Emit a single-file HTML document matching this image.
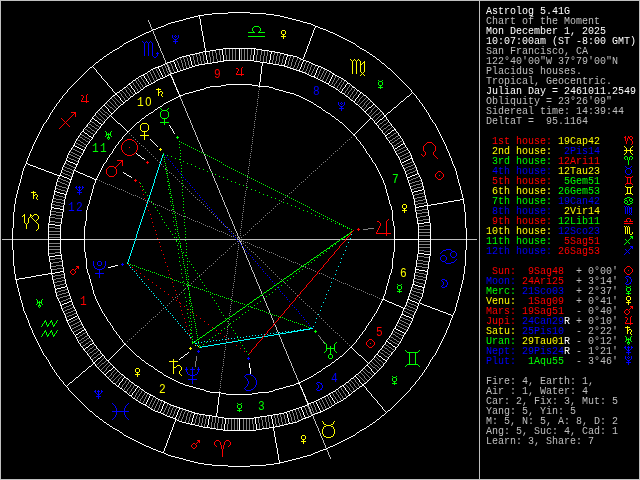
<!DOCTYPE html>
<html><head><meta charset="utf-8"><title>Astrolog 5.41G</title>
<style>
html,body{margin:0;padding:0;background:#000;}
body{width:640px;height:480px;overflow:hidden;position:relative;}
#side{position:absolute;left:0;top:0;width:640px;height:480px;font-family:"Liberation Mono",monospace;font-size:10px;line-height:10px;color:#fff;white-space:pre;will-change:transform;}
#side div{position:absolute;height:10px;}

</style></head><body>
<svg width="640" height="480" viewBox="0 0 640 480" shape-rendering="crispEdges" style="position:absolute;left:0;top:0;will-change:transform">
<path fill="none" stroke="#ffffff" stroke-width="1" transform="translate(0,0.5)" d="M228 12h22M212 13h16M250 13h16M204 14h8M266 14h8M198 15h6M274 15h6M194 16h4M199 16h1M280 16h4M190 17h4M199 17h1M284 17h4M186 18h4M199 18h1M288 18h4M183 19h3M200 19h1M292 19h4M179 20h4M200 20h1M296 20h4M175 21h4M200 21h1M300 21h3M171 22h4M200 22h1M303 22h4M168 23h3M200 23h1M307 23h4M166 24h2M200 24h1M311 24h2M164 25h2M201 25h1M313 25h2M161 26h3M201 26h1M315 26h3M158 27h3M201 27h1M315 27h1M318 27h2M156 28h2M201 28h1M314 28h1M320 28h3M153 29h3M201 29h1M314 29h1M323 29h3M151 30h2M201 30h1M313 30h1M326 30h2M149 31h2M202 31h1M313 31h1M328 31h2M146 32h3M202 32h1M313 32h1M330 32h3M144 33h2M202 33h1M312 33h1M333 33h2M142 34h2M202 34h1M312 34h1M335 34h2M140 35h2M202 35h1M312 35h1M337 35h2M138 36h2M203 36h1M311 36h1M339 36h2M136 37h2M203 37h1M311 37h1M341 37h2M134 38h2M203 38h1M310 38h1M343 38h2M132 39h2M203 39h1M310 39h1M345 39h2M130 40h2M203 40h1M310 40h1M347 40h2M128 41h2M203 41h1M309 41h1M349 41h2M126 42h2M204 42h1M309 42h1M351 42h2M124 43h2M204 43h1M309 43h1M353 43h2M123 44h1M204 44h1M308 44h1M355 44h1M122 45h1M204 45h1M308 45h1M356 45h1M120 46h2M204 46h1M307 46h1M357 46h2M119 47h1M204 47h1M307 47h1M359 47h1M117 48h2M205 48h1M223 48h33M307 48h1M360 48h2M115 49h2M205 49h1M216 49h7M239 49h1M254 49h1M256 49h6M306 49h1M362 49h2M113 50h2M205 50h1M210 50h6M222 50h1M239 50h1M254 50h1M262 50h7M306 50h1M364 50h2M112 51h1M203 51h7M222 51h1M239 51h1M254 51h1M269 51h6M306 51h1M366 51h1M110 52h2M199 52h4M205 52h1M222 52h1M239 52h1M254 52h1M271 52h1M275 52h5M305 52h1M367 52h2M109 53h1M195 53h4M205 53h1M222 53h1M239 53h1M254 53h1M271 53h1M280 53h4M305 53h1M369 53h1M107 54h2M190 54h5M205 54h1M222 54h1M239 54h1M254 54h1M270 54h1M284 54h4M304 54h1M370 54h2M106 55h1M186 55h4M206 55h1M223 55h1M239 55h1M253 55h1M270 55h1M287 55h6M304 55h1M372 55h1M104 56h2M182 56h4M189 56h1M206 56h1M223 56h1M239 56h1M253 56h1M270 56h1M287 56h1M293 56h4M304 56h1M373 56h2M103 57h1M179 57h3M190 57h1M206 57h1M223 57h1M239 57h1M253 57h1M270 57h1M286 57h1M297 57h2M303 57h1M375 57h1M102 58h1M177 58h2M190 58h1M206 58h1M223 58h1M239 58h1M253 58h1M270 58h1M286 58h1M299 58h2M303 58h1M376 58h1M100 59h2M175 59h2M190 59h1M206 59h1M223 59h1M239 59h1M253 59h1M270 59h1M286 59h1M301 59h2M377 59h2M99 60h1M173 60h2M190 60h1M207 60h1M223 60h31M269 60h1M285 60h1M303 60h3M379 60h1M98 61h1M170 61h4M191 61h1M207 61h1M218 61h6M254 61h6M269 61h1M285 61h1M303 61h1M306 61h3M380 61h1M96 62h2M167 62h3M174 62h1M191 62h1M207 62h1M212 62h6M260 62h7M269 62h1M285 62h1M302 62h1M309 62h2M381 62h1M95 63h1M165 63h2M174 63h1M191 63h1M205 63h7M262 63h1M267 63h6M285 63h1M302 63h1M311 63h2M382 63h2M94 64h1M163 64h2M175 64h1M191 64h1M199 64h6M262 64h1M273 64h6M284 64h1M301 64h1M313 64h2M384 64h1M93 65h1M161 65h2M175 65h1M192 65h1M195 65h4M262 65h1M279 65h6M301 65h1M315 65h3M385 65h1M92 66h1M158 66h3M175 66h1M192 66h3M261 66h1M284 66h3M301 66h1M318 66h3M386 66h1M90 67h2M93 67h1M155 67h4M176 67h1M189 67h3M261 67h1M287 67h3M300 67h1M318 67h1M321 67h2M387 67h1M89 68h1M94 68h1M153 68h2M158 68h1M176 68h1M186 68h3M261 68h1M290 68h3M300 68h1M317 68h1M323 68h2M388 68h2M88 69h1M95 69h1M151 69h2M159 69h1M177 69h1M183 69h3M261 69h1M293 69h3M299 69h1M317 69h1M325 69h2M390 69h1M87 70h1M96 70h1M150 70h1M159 70h1M177 70h1M180 70h3M261 70h1M296 70h4M316 70h1M327 70h2M391 70h1M86 71h1M96 71h1M148 71h2M160 71h1M177 71h3M261 71h1M299 71h3M316 71h1M329 71h2M392 71h1M85 72h1M97 72h1M147 72h1M160 72h1M174 72h3M261 72h1M302 72h3M316 72h1M331 72h1M393 72h1M84 73h1M98 73h1M145 73h2M161 73h1M171 73h3M261 73h1M305 73h2M315 73h1M332 73h2M394 73h1M83 74h1M99 74h1M143 74h2M161 74h1M169 74h2M260 74h1M307 74h2M315 74h1M333 74h2M395 74h1M82 75h1M100 75h1M141 75h3M162 75h1M167 75h2M170 75h1M260 75h1M309 75h2M314 75h1M332 75h1M335 75h2M396 75h1M81 76h1M101 76h1M139 76h2M144 76h1M162 76h1M165 76h2M171 76h1M260 76h1M311 76h4M332 76h1M337 76h2M397 76h1M80 77h1M101 77h1M138 77h1M144 77h1M163 77h2M171 77h1M260 77h1M314 77h2M331 77h1M339 77h2M398 77h1M79 78h1M102 78h1M136 78h2M145 78h1M160 78h3M172 78h1M260 78h1M316 78h2M331 78h1M341 78h2M399 78h1M78 79h1M103 79h1M135 79h1M146 79h1M158 79h2M172 79h1M260 79h1M318 79h2M330 79h1M343 79h1M400 79h1M77 80h1M104 80h1M133 80h2M146 80h1M156 80h2M173 80h1M260 80h1M320 80h2M330 80h1M344 80h2M401 80h1M76 81h1M105 81h1M132 81h1M147 81h1M155 81h1M173 81h1M260 81h1M322 81h2M329 81h1M346 81h1M402 81h1M75 82h1M106 82h1M131 82h1M148 82h1M153 82h2M173 82h1M259 82h1M324 82h2M329 82h1M347 82h1M403 82h1M74 83h1M107 83h1M129 83h2M148 83h1M151 83h2M174 83h1M259 83h1M326 83h3M347 83h3M404 83h1M73 84h1M107 84h1M128 84h2M149 84h2M174 84h1M226 84h26M259 84h1M328 84h1M346 84h1M350 84h1M405 84h1M72 85h1M108 85h1M127 85h1M130 85h1M147 85h2M175 85h1M221 85h5M252 85h6M259 85h1M329 85h2M345 85h1M351 85h1M406 85h1M71 86h1M109 86h1M126 86h1M131 86h1M145 86h2M175 86h1M210 86h11M258 86h11M331 86h2M345 86h1M352 86h1M407 86h1M70 87h1M110 87h1M124 87h2M131 87h1M144 87h1M176 87h1M206 87h4M269 87h4M333 87h2M344 87h1M353 87h2M408 87h1M69 88h1M111 88h1M123 88h1M132 88h1M143 88h1M176 88h1M204 88h2M273 88h2M335 88h1M343 88h1M355 88h1M409 88h1M68 89h1M112 89h1M122 89h1M133 89h1M141 89h2M176 89h1M200 89h4M275 89h4M336 89h2M342 89h1M356 89h1M410 89h1M67 90h1M112 90h1M120 90h2M134 90h1M140 90h1M177 90h1M196 90h4M279 90h4M338 90h1M342 90h1M357 90h2M411 90h1M67 91h1M113 91h1M119 91h1M134 91h1M139 91h1M177 91h1M193 91h3M283 91h3M339 91h1M341 91h1M359 91h1M411 91h1M66 92h1M114 92h1M117 92h2M135 92h1M137 92h2M178 92h1M189 92h4M286 92h4M340 92h2M360 92h2M412 92h1M65 93h1M115 93h2M135 93h2M178 93h1M185 93h4M290 93h4M342 93h2M360 93h1M362 93h1M411 93h1M413 93h1M64 94h1M115 94h2M134 94h1M179 94h1M183 94h2M294 94h2M344 94h1M359 94h1M363 94h1M410 94h1M414 94h1M63 95h1M113 95h2M117 95h1M133 95h1M179 95h4M296 95h3M345 95h1M358 95h1M364 95h2M409 95h1M415 95h1M62 96h1M112 96h1M118 96h1M131 96h2M178 96h2M299 96h2M346 96h2M358 96h1M366 96h1M407 96h2M416 96h1M62 97h1M111 97h1M119 97h1M130 97h1M176 97h2M301 97h2M348 97h1M357 97h1M367 97h1M406 97h1M416 97h1M61 98h1M110 98h1M120 98h1M129 98h1M174 98h2M303 98h2M349 98h1M356 98h1M368 98h1M405 98h1M417 98h1M60 99h1M109 99h1M120 99h1M128 99h1M172 99h2M305 99h2M350 99h1M355 99h1M369 99h1M404 99h1M418 99h1M59 100h1M108 100h1M121 100h1M126 100h2M170 100h2M307 100h2M351 100h2M355 100h1M370 100h1M403 100h1M419 100h1M59 101h1M107 101h1M122 101h1M125 101h1M168 101h2M309 101h2M353 101h2M371 101h1M401 101h2M419 101h1M58 102h1M106 102h1M123 102h2M166 102h2M311 102h2M354 102h1M372 102h1M400 102h1M420 102h1M57 103h1M105 103h1M123 103h1M164 103h2M313 103h1M355 103h1M373 103h1M399 103h1M421 103h1M56 104h1M104 104h1M121 104h2M163 104h1M314 104h2M356 104h2M373 104h2M398 104h1M422 104h1M56 105h1M103 105h2M120 105h1M162 105h1M316 105h1M358 105h1M372 105h1M375 105h1M397 105h1M422 105h1M55 106h1M102 106h1M105 106h1M119 106h1M160 106h2M317 106h2M359 106h1M371 106h1M376 106h1M396 106h1M423 106h1M54 107h1M101 107h1M106 107h1M118 107h1M158 107h2M319 107h2M360 107h1M369 107h2M377 107h1M394 107h2M424 107h1M54 108h1M100 108h1M107 108h1M117 108h1M157 108h1M321 108h1M361 108h1M368 108h1M378 108h1M393 108h1M424 108h1M53 109h1M99 109h1M108 109h1M116 109h1M155 109h2M322 109h1M362 109h1M367 109h1M379 109h1M392 109h1M425 109h1M52 110h1M98 110h1M108 110h1M115 110h1M154 110h1M323 110h2M363 110h1M366 110h1M380 110h1M391 110h1M426 110h1M52 111h1M97 111h1M109 111h1M114 111h1M153 111h1M325 111h1M364 111h2M381 111h1M390 111h1M426 111h1M51 112h1M96 112h1M110 112h1M113 112h1M151 112h2M326 112h2M365 112h1M382 112h1M388 112h2M427 112h1M50 113h1M95 113h1M111 113h2M149 113h2M328 113h2M366 113h1M383 113h1M387 113h1M428 113h1M50 114h1M95 114h1M111 114h1M148 114h1M330 114h1M367 114h1M383 114h1M386 114h1M428 114h1M49 115h1M94 115h1M110 115h1M146 115h2M331 115h1M368 115h1M384 115h2M429 115h1M49 116h1M93 116h1M109 116h1M111 116h1M145 116h1M332 116h2M369 116h1M384 116h2M429 116h1M48 117h1M92 117h1M108 117h1M112 117h1M144 117h1M334 117h1M370 117h1M383 117h1M386 117h1M430 117h1M48 118h1M92 118h2M107 118h1M113 118h1M142 118h2M335 118h1M370 118h2M382 118h1M386 118h1M430 118h1M47 119h1M91 119h1M94 119h1M106 119h1M114 119h1M141 119h1M336 119h2M369 119h1M372 119h1M380 119h2M387 119h1M431 119h1M46 120h1M90 120h1M95 120h2M105 120h1M115 120h1M140 120h1M338 120h1M368 120h1M373 120h1M379 120h1M388 120h1M432 120h1M46 121h1M90 121h1M97 121h1M104 121h1M116 121h1M139 121h1M339 121h1M367 121h1M374 121h1M378 121h1M388 121h1M432 121h1M45 122h1M89 122h1M98 122h1M104 122h1M117 122h1M137 122h2M340 122h2M366 122h1M374 122h1M377 122h1M389 122h1M433 122h1M44 123h1M88 123h1M99 123h2M103 123h1M118 123h2M136 123h1M342 123h1M365 123h1M375 123h2M390 123h1M434 123h1M43 124h1M87 124h1M101 124h2M120 124h1M135 124h1M343 124h1M364 124h1M376 124h1M391 124h1M435 124h1M43 125h1M87 125h1M101 125h1M121 125h1M134 125h1M169 125h1M344 125h1M363 125h1M377 125h1M391 125h1M435 125h1M42 126h1M86 126h1M100 126h1M122 126h1M133 126h1M170 126h1M345 126h1M362 126h1M378 126h1M392 126h1M436 126h1M42 127h1M85 127h1M100 127h1M123 127h1M132 127h1M170 127h1M346 127h1M361 127h1M378 127h1M393 127h1M436 127h1M41 128h1M84 128h1M99 128h1M124 128h1M131 128h1M171 128h1M347 128h1M360 128h1M379 128h1M394 128h1M437 128h1M41 129h1M83 129h1M98 129h1M125 129h1M130 129h1M172 129h1M348 129h1M359 129h1M380 129h1M394 129h2M437 129h1M40 130h1M83 130h1M97 130h1M126 130h1M129 130h1M172 130h1M349 130h1M358 130h1M381 130h1M392 130h2M395 130h1M438 130h1M40 131h1M82 131h2M96 131h1M127 131h2M173 131h1M350 131h1M357 131h1M382 131h1M391 131h1M396 131h1M438 131h1M39 132h1M81 132h1M84 132h1M96 132h1M127 132h1M173 132h1M351 132h1M356 132h1M382 132h1M390 132h1M397 132h1M439 132h1M39 133h1M80 133h1M85 133h2M95 133h1M126 133h1M174 133h1M352 133h1M355 133h1M383 133h1M388 133h2M398 133h1M439 133h1M38 134h1M80 134h1M87 134h1M94 134h1M125 134h1M353 134h2M384 134h1M387 134h1M398 134h1M440 134h1M38 135h1M79 135h1M88 135h1M93 135h1M124 135h1M354 135h1M385 135h2M399 135h1M440 135h1M37 136h1M78 136h1M89 136h2M93 136h1M123 136h1M355 136h1M385 136h1M400 136h1M441 136h1M37 137h1M78 137h1M91 137h2M122 137h1M356 137h1M386 137h1M400 137h1M441 137h1M36 138h1M77 138h1M92 138h1M122 138h1M356 138h1M386 138h1M401 138h1M442 138h1M36 139h1M76 139h1M91 139h1M121 139h1M150 139h1M357 139h1M387 139h1M402 139h1M442 139h1M35 140h1M76 140h1M90 140h1M120 140h1M151 140h1M358 140h1M388 140h1M402 140h1M443 140h1M35 141h1M75 141h1M89 141h1M119 141h1M152 141h1M359 141h1M389 141h1M403 141h1M443 141h1M34 142h1M75 142h1M89 142h1M118 142h1M153 142h1M360 142h1M389 142h1M403 142h1M444 142h1M34 143h1M74 143h1M88 143h1M118 143h1M154 143h1M360 143h1M390 143h1M403 143h2M444 143h1M33 144h1M74 144h1M87 144h1M117 144h1M155 144h1M361 144h1M391 144h1M401 144h2M404 144h1M445 144h1M33 145h1M73 145h2M86 145h1M116 145h1M156 145h1M362 145h1M392 145h1M400 145h1M405 145h1M445 145h1M32 146h1M73 146h1M75 146h2M86 146h1M115 146h1M157 146h1M363 146h1M392 146h1M398 146h2M405 146h1M446 146h1M32 147h1M72 147h1M77 147h2M85 147h1M115 147h1M363 147h1M393 147h1M397 147h1M406 147h1M446 147h1M32 148h1M71 148h1M79 148h2M85 148h1M114 148h1M364 148h1M393 148h1M395 148h2M407 148h1M446 148h1M31 149h1M71 149h1M81 149h2M84 149h1M113 149h1M365 149h1M394 149h1M407 149h1M447 149h1M31 150h1M70 150h1M83 150h2M113 150h1M365 150h1M394 150h1M408 150h1M447 150h1M30 151h1M69 151h1M83 151h1M112 151h1M366 151h1M395 151h1M409 151h1M448 151h1M30 152h1M69 152h1M83 152h1M112 152h1M366 152h1M395 152h1M409 152h1M448 152h1M29 153h1M68 153h1M82 153h1M111 153h1M136 153h1M367 153h1M396 153h1M410 153h1M449 153h1M29 154h1M68 154h1M82 154h1M110 154h1M137 154h1M368 154h1M396 154h1M410 154h1M449 154h1M29 155h1M67 155h1M81 155h1M109 155h1M138 155h2M369 155h1M397 155h1M411 155h1M449 155h1M28 156h1M67 156h1M80 156h1M109 156h1M140 156h1M369 156h1M398 156h1M411 156h1M450 156h1M28 157h1M67 157h1M80 157h1M108 157h1M141 157h1M370 157h1M398 157h1M411 157h1M450 157h1M27 158h1M66 158h1M79 158h1M107 158h1M142 158h2M371 158h1M399 158h1M410 158h3M451 158h1M27 159h1M66 159h1M79 159h1M107 159h1M144 159h1M371 159h1M399 159h1M408 159h2M412 159h1M451 159h1M27 160h1M66 160h2M78 160h1M106 160h1M372 160h1M400 160h1M406 160h2M412 160h1M451 160h1M26 161h1M65 161h1M68 161h2M78 161h1M106 161h1M372 161h1M400 161h1M404 161h2M413 161h1M452 161h1M26 162h1M65 162h1M70 162h3M78 162h1M105 162h1M373 162h1M400 162h1M402 162h2M413 162h1M452 162h1M26 163h2M64 163h1M73 163h2M77 163h1M104 163h1M374 163h1M401 163h1M414 163h1M452 163h1M25 164h1M28 164h2M64 164h1M75 164h3M103 164h1M375 164h1M401 164h1M414 164h1M453 164h1M25 165h1M30 165h3M63 165h1M76 165h1M103 165h1M375 165h1M402 165h1M415 165h1M453 165h1M24 166h1M33 166h3M63 166h1M76 166h1M102 166h1M376 166h1M402 166h1M415 166h1M454 166h1M24 167h1M36 167h2M62 167h1M75 167h1M102 167h1M376 167h1M403 167h1M416 167h1M454 167h1M23 168h1M38 168h3M62 168h1M75 168h1M101 168h1M377 168h1M403 168h1M416 168h1M455 168h1M23 169h1M41 169h3M62 169h1M74 169h1M101 169h1M377 169h1M404 169h1M416 169h1M455 169h1M23 170h1M44 170h2M61 170h1M74 170h2M100 170h1M378 170h1M404 170h1M417 170h1M455 170h1M22 171h1M46 171h3M61 171h1M73 171h1M76 171h2M100 171h1M378 171h1M405 171h1M417 171h1M456 171h1M22 172h1M49 172h3M61 172h1M73 172h1M78 172h2M99 172h1M123 172h1M379 172h1M405 172h1M417 172h1M456 172h1M22 173h1M52 173h2M60 173h1M73 173h1M80 173h3M99 173h1M124 173h2M379 173h1M405 173h1M417 173h2M456 173h1M22 174h1M54 174h3M60 174h1M72 174h1M83 174h2M98 174h1M126 174h1M380 174h1M406 174h1M415 174h2M418 174h1M456 174h1M21 175h1M57 175h5M72 175h1M85 175h2M98 175h1M127 175h2M380 175h1M406 175h1M412 175h3M419 175h1M457 175h1M21 176h1M59 176h1M62 176h2M72 176h1M87 176h3M97 176h1M129 176h2M381 176h1M406 176h1M410 176h2M419 176h1M457 176h1M21 177h1M58 177h1M64 177h3M71 177h1M90 177h2M97 177h1M131 177h1M381 177h1M407 177h3M420 177h1M457 177h1M21 178h1M58 178h1M67 178h2M71 178h1M92 178h2M96 178h1M382 178h1M407 178h1M420 178h1M457 178h1M20 179h1M57 179h1M69 179h3M94 179h3M382 179h1M407 179h1M421 179h1M458 179h1M20 180h1M57 180h1M70 180h1M95 180h1M383 180h1M408 180h1M421 180h1M458 180h1M20 181h1M57 181h1M70 181h1M95 181h1M383 181h1M408 181h1M421 181h1M458 181h1M20 182h1M56 182h1M70 182h1M95 182h1M383 182h1M408 182h1M422 182h1M458 182h1M19 183h1M56 183h1M69 183h1M94 183h1M384 183h1M409 183h1M422 183h1M459 183h1M19 184h1M56 184h1M69 184h1M94 184h1M384 184h1M409 184h1M422 184h1M459 184h1M19 185h1M56 185h1M69 185h1M93 185h1M385 185h1M409 185h1M422 185h1M459 185h1M18 186h1M55 186h1M68 186h1M93 186h1M385 186h1M410 186h1M423 186h1M460 186h1M18 187h1M55 187h1M68 187h1M93 187h1M385 187h1M410 187h1M423 187h1M460 187h1M18 188h1M55 188h1M68 188h1M93 188h1M385 188h1M410 188h1M423 188h1M460 188h1M18 189h1M55 189h1M67 189h1M92 189h1M386 189h1M411 189h1M422 189h2M460 189h1M17 190h1M54 190h1M67 190h1M92 190h1M386 190h1M411 190h1M418 190h4M424 190h1M461 190h1M17 191h1M54 191h3M67 191h1M92 191h1M386 191h1M411 191h1M414 191h4M424 191h1M461 191h1M17 192h1M54 192h1M57 192h3M66 192h1M92 192h1M386 192h1M412 192h2M424 192h1M461 192h1M17 193h1M54 193h1M60 193h4M66 193h1M91 193h1M387 193h1M412 193h1M424 193h1M461 193h1M16 194h1M54 194h1M64 194h3M91 194h1M387 194h1M412 194h1M424 194h1M462 194h1M16 195h1M53 195h1M65 195h1M91 195h1M387 195h1M413 195h1M425 195h1M462 195h1M16 196h1M53 196h1M65 196h1M90 196h1M388 196h1M413 196h1M425 196h1M462 196h1M16 197h1M53 197h1M65 197h1M90 197h1M388 197h1M413 197h1M425 197h1M462 197h1M15 198h1M53 198h1M65 198h1M90 198h1M388 198h1M413 198h1M425 198h1M463 198h1M15 199h1M52 199h1M64 199h1M90 199h1M388 199h1M414 199h1M426 199h1M460 199h4M15 200h1M52 200h1M64 200h1M89 200h1M389 200h1M414 200h1M426 200h1M454 200h6M463 200h1M15 201h1M52 201h1M64 201h1M89 201h1M389 201h1M414 201h1M426 201h1M448 201h6M463 201h1M15 202h1M52 202h1M64 202h1M89 202h1M389 202h1M414 202h1M426 202h1M443 202h5M463 202h1M15 203h1M51 203h1M64 203h1M89 203h1M389 203h1M414 203h1M427 203h1M437 203h6M463 203h1M14 204h1M51 204h1M64 204h1M88 204h1M390 204h1M414 204h1M427 204h1M431 204h6M464 204h1M14 205h1M51 205h1M63 205h1M88 205h1M390 205h1M415 205h1M424 205h7M464 205h1M14 206h1M51 206h1M63 206h1M87 206h1M391 206h1M415 206h1M419 206h5M427 206h1M464 206h1M14 207h1M51 207h3M63 207h1M87 207h1M391 207h1M415 207h4M427 207h1M464 207h1M14 208h1M51 208h1M54 208h6M63 208h1M87 208h1M391 208h1M415 208h1M427 208h1M464 208h1M14 209h1M51 209h1M60 209h4M87 209h1M391 209h1M415 209h1M427 209h1M464 209h1M14 210h1M50 210h1M63 210h1M86 210h1M392 210h1M415 210h1M428 210h1M464 210h1M14 211h1M50 211h1M63 211h1M86 211h1M392 211h1M415 211h1M428 211h1M464 211h1M13 212h1M50 212h1M62 212h1M86 212h1M392 212h1M416 212h1M428 212h1M465 212h1M13 213h1M50 213h1M62 213h1M86 213h1M392 213h1M416 213h1M428 213h1M465 213h1M13 214h1M50 214h1M62 214h1M86 214h1M392 214h1M416 214h1M428 214h1M465 214h1M13 215h1M50 215h1M62 215h1M86 215h1M392 215h1M416 215h1M428 215h1M465 215h1M13 216h1M49 216h1M62 216h1M86 216h1M392 216h1M416 216h1M429 216h1M465 216h1M13 217h1M49 217h1M62 217h1M86 217h1M392 217h1M416 217h1M429 217h1M465 217h1M13 218h1M49 218h1M61 218h1M86 218h1M392 218h1M417 218h1M429 218h1M465 218h1M13 219h1M49 219h1M61 219h1M86 219h1M392 219h1M417 219h1M429 219h1M465 219h1M13 220h1M49 220h1M61 220h1M86 220h1M392 220h1M417 220h1M429 220h1M465 220h1M13 221h1M49 221h1M61 221h1M85 221h1M393 221h1M417 221h1M429 221h1M465 221h1M13 222h1M49 222h1M61 222h1M85 222h1M393 222h1M417 222h1M424 222h6M465 222h1M13 223h1M48 223h1M61 223h1M85 223h1M393 223h1M417 223h7M430 223h1M465 223h1M13 224h1M48 224h7M60 224h1M85 224h1M393 224h1M418 224h1M430 224h1M465 224h1M13 225h1M48 225h1M55 225h6M85 225h1M393 225h1M418 225h1M430 225h1M465 225h1M13 226h1M48 226h1M60 226h1M84 226h1M394 226h1M418 226h1M430 226h1M465 226h1M13 227h1M48 227h1M60 227h1M84 227h1M394 227h1M418 227h1M430 227h1M465 227h1M12 228h1M48 228h1M60 228h1M84 228h1M394 228h1M418 228h1M430 228h1M466 228h1M12 229h1M48 229h1M60 229h1M84 229h1M394 229h1M418 229h1M430 229h1M466 229h1M12 230h1M48 230h1M60 230h1M84 230h1M394 230h1M418 230h1M430 230h1M466 230h1M12 231h1M48 231h1M60 231h1M84 231h1M394 231h1M418 231h1M430 231h1M466 231h1M12 232h1M48 232h1M60 232h1M84 232h1M394 232h1M418 232h1M430 232h1M466 232h1M12 233h1M48 233h1M60 233h1M84 233h1M394 233h1M418 233h1M430 233h1M466 233h1M12 234h1M48 234h1M60 234h1M84 234h1M394 234h1M418 234h1M430 234h1M466 234h1M12 235h1M48 235h1M60 235h1M84 235h1M394 235h1M418 235h1M430 235h1M466 235h1M12 236h1M48 236h1M60 236h1M84 236h1M394 236h1M418 236h1M430 236h1M466 236h1M12 237h1M48 237h1M60 237h1M84 237h1M394 237h1M418 237h1M430 237h1M466 237h1M12 238h1M48 238h1M60 238h1M84 238h1M394 238h1M418 238h1M430 238h1M466 238h1M12 239h1M48 239h37M394 239h37M466 239h1M12 240h1M48 240h1M60 240h1M84 240h1M394 240h1M418 240h1M430 240h1M466 240h1M12 241h1M48 241h1M60 241h1M84 241h1M394 241h1M418 241h1M430 241h1M466 241h1M12 242h1M48 242h1M60 242h1M84 242h1M394 242h1M418 242h1M430 242h1M466 242h1M12 243h1M48 243h1M60 243h1M84 243h1M394 243h1M418 243h1M430 243h1M466 243h1M12 244h1M48 244h1M60 244h1M84 244h1M394 244h1M418 244h1M430 244h1M466 244h1M12 245h1M48 245h1M60 245h1M84 245h1M394 245h1M418 245h1M430 245h1M466 245h1M12 246h1M48 246h1M60 246h1M84 246h1M394 246h1M418 246h1M430 246h1M466 246h1M12 247h1M48 247h1M60 247h1M84 247h1M394 247h1M418 247h1M430 247h1M466 247h1M12 248h1M48 248h1M60 248h1M84 248h1M394 248h1M418 248h1M430 248h1M466 248h1M12 249h1M48 249h1M60 249h1M84 249h1M394 249h1M418 249h1M430 249h1M466 249h1M13 250h1M48 250h1M60 250h1M84 250h1M394 250h1M418 250h1M430 250h1M465 250h1M13 251h1M48 251h1M60 251h1M84 251h1M394 251h1M418 251h1M430 251h1M465 251h1M13 252h1M48 252h1M60 252h1M85 252h1M393 252h1M418 252h1M430 252h1M465 252h1M13 253h1M48 253h1M60 253h1M85 253h1M393 253h1M418 253h6M430 253h1M465 253h1M13 254h1M48 254h1M61 254h1M85 254h1M393 254h1M417 254h1M424 254h7M465 254h1M13 255h1M48 255h1M55 255h7M85 255h1M393 255h1M417 255h1M430 255h1M465 255h1M13 256h1M49 256h6M61 256h1M85 256h1M393 256h1M417 256h1M429 256h1M465 256h1M13 257h1M49 257h1M61 257h1M85 257h1M393 257h1M417 257h1M429 257h1M465 257h1M13 258h1M49 258h1M61 258h1M86 258h1M392 258h1M417 258h1M429 258h1M465 258h1M13 259h1M49 259h1M61 259h1M86 259h1M392 259h1M417 259h1M429 259h1M465 259h1M13 260h1M49 260h1M62 260h1M86 260h1M392 260h1M416 260h1M429 260h1M465 260h1M13 261h1M49 261h1M62 261h1M86 261h1M392 261h1M416 261h1M429 261h1M465 261h1M13 262h1M50 262h1M62 262h1M86 262h1M392 262h1M416 262h1M428 262h1M465 262h1M13 263h1M50 263h1M62 263h1M86 263h1M392 263h1M416 263h1M428 263h1M465 263h1M13 264h1M50 264h1M62 264h1M86 264h1M392 264h1M416 264h1M428 264h1M465 264h1M13 265h1M50 265h1M62 265h1M86 265h1M115 265h3M392 265h1M416 265h1M428 265h1M465 265h1M14 266h1M50 266h1M62 266h1M86 266h1M111 266h4M392 266h1M416 266h1M428 266h1M464 266h1M14 267h1M50 267h1M63 267h1M86 267h1M108 267h3M392 267h1M415 267h1M428 267h1M464 267h1M14 268h1M50 268h1M63 268h1M86 268h1M392 268h1M415 268h1M428 268h1M464 268h1M14 269h1M51 269h1M63 269h1M87 269h1M391 269h1M415 269h4M427 269h1M464 269h1M14 270h1M51 270h1M63 270h1M87 270h1M391 270h1M415 270h1M419 270h6M427 270h1M464 270h1M14 271h1M51 271h1M60 271h4M87 271h1M391 271h1M415 271h1M425 271h3M464 271h1M14 272h1M51 272h1M55 272h5M63 272h1M87 272h1M391 272h1M415 272h1M427 272h1M464 272h1M14 273h1M48 273h7M64 273h1M88 273h1M390 273h1M414 273h1M427 273h1M464 273h1M15 274h1M42 274h6M51 274h1M64 274h1M88 274h1M390 274h1M414 274h1M427 274h1M463 274h1M15 275h1M36 275h6M52 275h1M64 275h1M89 275h1M389 275h1M414 275h1M426 275h1M463 275h1M15 276h1M31 276h5M52 276h1M64 276h1M89 276h1M389 276h1M414 276h1M426 276h1M463 276h1M15 277h1M25 277h6M52 277h1M64 277h1M89 277h1M389 277h1M414 277h1M426 277h1M463 277h1M15 278h1M19 278h6M52 278h1M64 278h1M89 278h1M389 278h1M414 278h1M426 278h1M463 278h1M15 279h4M52 279h1M65 279h1M90 279h1M388 279h1M413 279h1M426 279h1M463 279h1M16 280h1M53 280h1M65 280h1M90 280h1M388 280h1M413 280h1M425 280h1M462 280h1M16 281h1M53 281h1M65 281h1M90 281h1M388 281h1M413 281h1M425 281h1M462 281h1M16 282h1M53 282h1M65 282h1M90 282h1M388 282h1M413 282h1M425 282h1M462 282h1M16 283h1M53 283h1M65 283h1M91 283h1M387 283h1M413 283h1M425 283h1M462 283h1M17 284h1M54 284h1M66 284h1M91 284h1M387 284h1M412 284h3M424 284h1M461 284h1M17 285h1M54 285h1M66 285h1M91 285h1M387 285h1M412 285h1M415 285h3M424 285h1M461 285h1M17 286h1M54 286h1M65 286h2M92 286h1M386 286h1M412 286h1M418 286h4M424 286h1M461 286h1M17 287h1M54 287h1M61 287h4M67 287h1M92 287h1M386 287h1M411 287h1M422 287h3M461 287h1M18 288h1M55 288h1M57 288h4M67 288h1M92 288h1M386 288h1M411 288h1M423 288h1M460 288h1M18 289h1M55 289h2M67 289h1M92 289h1M386 289h1M411 289h1M423 289h1M460 289h1M18 290h1M55 290h1M68 290h1M93 290h1M385 290h1M410 290h1M423 290h1M460 290h1M18 291h1M55 291h1M68 291h1M93 291h1M385 291h1M410 291h1M423 291h1M460 291h1M19 292h1M55 292h1M68 292h1M93 292h1M385 292h1M410 292h1M423 292h1M459 292h1M19 293h1M56 293h1M69 293h1M93 293h1M385 293h1M409 293h1M422 293h1M459 293h1M19 294h1M56 294h1M69 294h1M94 294h1M384 294h1M409 294h1M422 294h1M459 294h1M19 295h1M56 295h1M69 295h1M94 295h1M384 295h1M409 295h1M422 295h1M459 295h1M20 296h1M56 296h1M70 296h1M95 296h1M383 296h1M408 296h1M422 296h1M458 296h1M20 297h1M57 297h1M70 297h1M95 297h1M383 297h1M408 297h1M421 297h1M458 297h1M20 298h1M57 298h1M70 298h1M95 298h1M383 298h1M408 298h1M421 298h1M458 298h1M20 299h1M58 299h1M71 299h1M96 299h1M382 299h3M407 299h3M420 299h1M458 299h1M21 300h1M58 300h1M71 300h1M96 300h1M382 300h1M385 300h2M407 300h1M410 300h2M420 300h1M457 300h1M21 301h1M59 301h1M69 301h3M97 301h1M381 301h1M387 301h2M407 301h1M412 301h3M419 301h1M457 301h1M21 302h1M59 302h1M67 302h2M72 302h1M97 302h1M381 302h1M389 302h3M406 302h1M415 302h2M419 302h1M457 302h1M22 303h1M60 303h1M64 303h3M72 303h1M98 303h1M380 303h1M392 303h2M406 303h1M417 303h2M420 303h2M456 303h1M22 304h1M60 304h1M62 304h2M72 304h1M98 304h1M380 304h1M394 304h2M406 304h1M418 304h1M422 304h2M456 304h1M22 305h1M60 305h2M73 305h1M99 305h1M379 305h1M396 305h3M405 305h1M418 305h1M424 305h3M456 305h1M22 306h1M61 306h1M73 306h1M99 306h1M379 306h1M399 306h2M405 306h1M417 306h1M427 306h3M456 306h1M23 307h1M61 307h1M74 307h1M100 307h1M378 307h1M401 307h2M404 307h1M417 307h1M430 307h2M455 307h1M23 308h1M61 308h1M74 308h1M100 308h1M378 308h1M403 308h2M417 308h1M432 308h3M455 308h1M23 309h1M62 309h1M75 309h1M101 309h1M377 309h1M403 309h1M416 309h1M435 309h3M455 309h1M23 310h1M62 310h1M75 310h1M101 310h1M377 310h1M403 310h1M416 310h1M438 310h2M455 310h1M24 311h1M63 311h1M76 311h1M102 311h1M376 311h1M402 311h1M415 311h1M440 311h3M454 311h1M24 312h1M63 312h1M76 312h1M102 312h1M376 312h1M402 312h1M415 312h1M443 312h3M454 312h1M25 313h1M64 313h1M76 313h1M103 313h1M375 313h1M402 313h1M414 313h1M446 313h2M453 313h1M25 314h1M64 314h1M77 314h1M104 314h1M374 314h1M401 314h3M414 314h1M448 314h3M453 314h1M26 315h1M65 315h1M77 315h1M104 315h1M374 315h1M401 315h1M404 315h2M413 315h1M451 315h2M26 316h1M65 316h1M75 316h2M78 316h1M105 316h1M373 316h1M400 316h1M406 316h3M413 316h1M452 316h1M26 317h1M65 317h1M73 317h2M78 317h1M106 317h1M372 317h1M400 317h1M409 317h2M413 317h1M452 317h1M27 318h1M66 318h1M71 318h2M79 318h1M106 318h1M372 318h1M399 318h1M411 318h2M451 318h1M27 319h1M66 319h1M69 319h2M79 319h1M107 319h1M371 319h1M399 319h1M412 319h1M451 319h1M28 320h1M66 320h3M80 320h1M107 320h1M371 320h1M398 320h1M412 320h1M450 320h1M28 321h1M67 321h1M80 321h1M108 321h1M370 321h1M398 321h1M411 321h1M450 321h1M28 322h1M67 322h1M81 322h1M109 322h1M369 322h1M397 322h1M411 322h1M450 322h1M29 323h1M68 323h1M81 323h1M110 323h1M368 323h1M397 323h1M410 323h1M449 323h1M29 324h1M68 324h1M82 324h1M110 324h1M368 324h1M396 324h1M410 324h1M449 324h1M29 325h1M69 325h1M82 325h1M111 325h1M367 325h1M396 325h1M409 325h1M449 325h1M30 326h1M69 326h1M83 326h1M112 326h1M366 326h1M395 326h1M409 326h1M448 326h1M30 327h1M70 327h1M83 327h1M112 327h1M366 327h1M395 327h1M408 327h1M448 327h1M31 328h1M70 328h1M84 328h1M113 328h1M365 328h1M394 328h2M408 328h1M447 328h1M31 329h1M71 329h1M84 329h2M113 329h1M365 329h1M393 329h1M396 329h2M407 329h1M447 329h1M32 330h1M71 330h1M82 330h2M85 330h1M114 330h1M364 330h1M393 330h1M398 330h2M407 330h1M446 330h1M32 331h1M72 331h1M81 331h1M86 331h1M115 331h1M363 331h1M392 331h1M400 331h2M406 331h1M446 331h1M32 332h1M73 332h1M79 332h2M86 332h1M116 332h1M362 332h1M392 332h1M402 332h2M405 332h1M446 332h1M33 333h1M73 333h1M78 333h1M87 333h1M116 333h1M362 333h1M391 333h1M404 333h2M445 333h1M33 334h1M74 334h1M76 334h2M87 334h1M117 334h1M361 334h1M391 334h1M404 334h1M445 334h1M34 335h1M75 335h1M88 335h1M118 335h1M360 335h1M390 335h1M403 335h1M444 335h1M34 336h1M75 336h1M89 336h1M119 336h1M359 336h1M389 336h1M403 336h1M444 336h1M35 337h1M76 337h1M89 337h1M119 337h1M359 337h1M389 337h1M402 337h1M443 337h1M35 338h1M76 338h1M90 338h1M120 338h1M358 338h1M388 338h1M402 338h1M443 338h1M36 339h1M77 339h1M91 339h1M121 339h1M357 339h1M387 339h1M401 339h1M442 339h1M36 340h1M77 340h1M92 340h1M122 340h1M356 340h1M386 340h1M401 340h1M442 340h1M37 341h1M78 341h1M92 341h1M122 341h1M356 341h1M386 341h2M400 341h1M441 341h1M37 342h1M78 342h1M93 342h1M123 342h1M355 342h1M385 342h1M388 342h1M400 342h1M441 342h1M38 343h1M79 343h1M92 343h2M124 343h1M354 343h1M385 343h1M389 343h2M399 343h1M440 343h1M38 344h1M80 344h1M90 344h2M94 344h1M124 344h2M353 344h1M384 344h1M391 344h1M398 344h1M440 344h1M39 345h1M80 345h1M89 345h1M95 345h1M123 345h1M126 345h1M352 345h1M383 345h1M392 345h1M398 345h1M439 345h1M39 346h1M81 346h1M88 346h1M96 346h1M122 346h1M127 346h1M351 346h1M382 346h1M393 346h2M397 346h1M439 346h1M40 347h1M82 347h1M86 347h2M96 347h1M121 347h1M128 347h1M350 347h2M382 347h1M395 347h2M438 347h1M40 348h1M83 348h1M85 348h1M97 348h1M120 348h1M129 348h1M349 348h1M352 348h1M381 348h1M395 348h1M438 348h1M41 349h1M83 349h2M98 349h1M119 349h1M130 349h1M348 349h1M353 349h1M380 349h1M395 349h1M437 349h1M41 350h1M84 350h1M99 350h1M118 350h1M131 350h1M347 350h1M354 350h1M379 350h1M394 350h1M437 350h1M42 351h1M85 351h1M100 351h1M117 351h1M132 351h1M346 351h1M355 351h1M378 351h1M393 351h1M436 351h1M42 352h1M86 352h1M100 352h1M116 352h1M133 352h1M188 352h1M345 352h1M356 352h1M378 352h1M392 352h1M436 352h1M43 353h1M87 353h1M101 353h1M115 353h1M134 353h1M187 353h1M344 353h1M357 353h1M377 353h1M391 353h1M435 353h1M43 354h1M87 354h1M102 354h1M114 354h1M135 354h1M185 354h2M343 354h1M358 354h1M376 354h2M391 354h1M435 354h1M44 355h1M88 355h1M102 355h2M113 355h1M136 355h1M184 355h1M342 355h1M359 355h2M375 355h1M378 355h1M390 355h1M434 355h1M45 356h1M89 356h1M101 356h1M104 356h1M112 356h1M137 356h2M183 356h1M340 356h2M361 356h1M374 356h1M379 356h2M389 356h1M433 356h1M46 357h1M90 357h1M100 357h1M104 357h1M111 357h1M139 357h1M181 357h2M339 357h1M362 357h1M374 357h1M381 357h1M388 357h1M432 357h1M46 358h1M90 358h1M98 358h2M105 358h1M110 358h1M140 358h1M180 358h1M338 358h1M363 358h1M373 358h1M382 358h1M388 358h1M432 358h1M47 359h1M91 359h1M97 359h1M106 359h1M109 359h1M141 359h1M179 359h1M336 359h2M364 359h1M372 359h1M383 359h2M387 359h1M431 359h1M48 360h1M92 360h1M96 360h1M107 360h2M142 360h2M335 360h1M365 360h1M371 360h1M385 360h2M430 360h1M48 361h1M92 361h1M95 361h1M108 361h1M144 361h1M334 361h1M366 361h1M370 361h1M386 361h1M430 361h1M49 362h1M93 362h2M109 362h1M145 362h1M332 362h2M367 362h1M369 362h1M385 362h1M429 362h1M49 363h1M93 363h2M110 363h1M146 363h2M249 363h1M331 363h1M368 363h1M384 363h1M429 363h1M50 364h1M92 364h1M95 364h1M111 364h1M148 364h1M249 364h1M330 364h1M367 364h1M383 364h1M428 364h1M50 365h1M91 365h1M95 365h1M112 365h1M149 365h2M249 365h1M328 365h2M366 365h2M383 365h1M428 365h1M51 366h1M89 366h2M96 366h1M113 366h1M151 366h2M249 366h1M326 366h2M365 366h1M368 366h1M382 366h1M427 366h1M52 367h1M88 367h1M97 367h1M113 367h2M153 367h1M249 367h1M325 367h1M364 367h1M369 367h1M381 367h1M426 367h1M52 368h1M87 368h1M98 368h1M112 368h1M115 368h1M154 368h1M250 368h1M323 368h2M363 368h1M370 368h1M380 368h1M426 368h1M53 369h1M86 369h1M99 369h1M111 369h1M116 369h1M155 369h2M250 369h1M322 369h1M362 369h1M371 369h1M379 369h1M425 369h1M54 370h1M85 370h1M100 370h1M109 370h2M117 370h1M157 370h1M250 370h1M321 370h1M361 370h1M371 370h1M378 370h1M424 370h1M54 371h1M83 371h2M101 371h1M108 371h1M118 371h1M158 371h2M250 371h1M319 371h2M360 371h1M372 371h1M377 371h1M424 371h1M55 372h1M82 372h1M102 372h1M107 372h1M119 372h1M160 372h2M250 372h1M317 372h2M359 372h1M373 372h1M376 372h1M423 372h1M56 373h1M81 373h1M103 373h1M106 373h1M120 373h1M162 373h1M250 373h1M316 373h1M358 373h1M374 373h2M422 373h1M56 374h1M80 374h1M104 374h2M121 374h2M163 374h1M314 374h2M356 374h2M374 374h1M422 374h1M57 375h1M79 375h1M105 375h1M123 375h1M164 375h2M313 375h1M355 375h1M373 375h1M421 375h1M58 376h1M78 376h1M106 376h1M124 376h1M166 376h2M311 376h2M354 376h2M372 376h1M420 376h1M59 377h1M76 377h2M107 377h1M124 377h2M168 377h2M309 377h2M353 377h1M356 377h1M371 377h1M419 377h1M59 378h1M75 378h1M108 378h1M123 378h1M126 378h2M170 378h2M307 378h2M351 378h2M357 378h1M370 378h1M419 378h1M60 379h1M74 379h1M109 379h1M122 379h1M128 379h1M172 379h2M305 379h2M350 379h1M358 379h1M369 379h1M418 379h1M61 380h1M73 380h1M110 380h1M122 380h1M129 380h1M174 380h2M303 380h2M349 380h1M359 380h1M368 380h1M417 380h1M62 381h1M72 381h1M111 381h1M121 381h1M130 381h1M176 381h2M301 381h2M348 381h1M359 381h1M367 381h1M416 381h1M63 382h1M70 382h2M112 382h1M120 382h1M131 382h2M178 382h2M299 382h2M346 382h2M360 382h1M366 382h1M415 382h1M63 383h1M69 383h1M113 383h2M119 383h1M133 383h1M180 383h3M296 383h4M345 383h1M361 383h1M364 383h2M415 383h1M64 384h1M68 384h1M115 384h1M119 384h1M134 384h1M183 384h2M294 384h2M299 384h1M344 384h1M362 384h2M414 384h1M65 385h1M67 385h1M116 385h1M118 385h1M135 385h2M185 385h4M290 385h4M300 385h1M342 385h2M362 385h2M413 385h1M66 386h1M117 386h2M137 386h2M189 386h4M286 386h4M300 386h1M340 386h2M343 386h1M360 386h2M364 386h1M412 386h1M67 387h1M119 387h1M137 387h1M139 387h1M193 387h3M283 387h3M301 387h1M339 387h1M344 387h1M359 387h1M365 387h1M411 387h1M68 388h1M120 388h2M136 388h1M140 388h1M196 388h4M279 388h4M301 388h1M338 388h1M345 388h1M357 388h2M366 388h1M410 388h1M68 389h1M122 389h1M135 389h1M141 389h2M200 389h4M275 389h4M302 389h1M336 389h2M345 389h1M356 389h1M366 389h1M410 389h1M69 390h1M123 390h1M135 390h1M143 390h1M204 390h2M273 390h2M302 390h1M335 390h1M346 390h1M355 390h1M367 390h1M409 390h1M70 391h1M124 391h2M134 391h1M144 391h1M206 391h4M269 391h4M302 391h1M333 391h2M347 391h1M353 391h2M368 391h1M408 391h1M71 392h1M126 392h1M133 392h1M145 392h2M210 392h11M258 392h11M303 392h1M331 392h2M348 392h1M352 392h1M369 392h1M407 392h1M72 393h1M127 393h1M132 393h1M147 393h2M219 393h1M221 393h5M252 393h6M303 393h1M329 393h2M348 393h1M351 393h1M370 393h1M406 393h1M73 394h1M128 394h1M132 394h1M149 394h2M219 394h1M226 394h26M304 394h1M328 394h2M349 394h2M371 394h1M405 394h1M74 395h1M129 395h3M150 395h3M219 395h1M304 395h1M326 395h2M330 395h1M348 395h2M371 395h1M404 395h1M75 396h1M131 396h1M149 396h1M153 396h2M219 396h1M305 396h1M324 396h2M330 396h1M347 396h1M372 396h1M403 396h1M76 397h1M132 397h1M149 397h1M155 397h1M218 397h1M305 397h1M322 397h2M331 397h1M346 397h1M373 397h1M402 397h1M77 398h1M133 398h2M148 398h1M156 398h2M218 398h1M305 398h1M320 398h2M332 398h1M344 398h2M374 398h1M401 398h1M78 399h1M135 399h1M148 399h1M158 399h2M218 399h1M306 399h1M318 399h2M332 399h1M343 399h1M375 399h1M400 399h1M79 400h1M136 400h2M147 400h1M160 400h3M218 400h1M306 400h1M316 400h2M333 400h1M341 400h2M376 400h1M399 400h1M80 401h1M138 401h1M147 401h1M163 401h2M218 401h1M307 401h1M314 401h2M334 401h1M339 401h2M377 401h1M398 401h1M81 402h1M139 402h2M146 402h1M164 402h3M218 402h1M307 402h1M311 402h3M316 402h1M334 402h1M337 402h2M377 402h1M397 402h1M82 403h1M141 403h2M146 403h1M164 403h1M167 403h2M218 403h1M308 403h3M316 403h1M335 403h2M378 403h1M396 403h1M83 404h1M143 404h3M163 404h1M169 404h2M218 404h1M307 404h2M317 404h1M334 404h1M379 404h1M395 404h1M84 405h1M145 405h2M163 405h1M171 405h3M217 405h1M305 405h2M317 405h1M332 405h2M380 405h1M394 405h1M85 406h1M147 406h1M162 406h1M174 406h3M217 406h1M302 406h3M318 406h1M331 406h1M381 406h1M393 406h1M86 407h1M148 407h2M162 407h1M177 407h3M217 407h1M299 407h3M318 407h1M329 407h2M382 407h1M392 407h1M87 408h1M150 408h1M162 408h1M179 408h4M217 408h1M296 408h3M301 408h1M319 408h1M327 408h2M382 408h1M391 408h1M88 409h1M151 409h2M161 409h1M179 409h1M183 409h3M217 409h1M293 409h3M301 409h1M319 409h1M325 409h2M383 409h1M390 409h1M89 410h1M153 410h2M161 410h1M178 410h1M186 410h3M217 410h1M290 410h3M302 410h1M320 410h1M323 410h2M384 410h1M388 410h2M90 411h2M155 411h3M160 411h1M178 411h1M189 411h3M217 411h1M287 411h3M302 411h1M320 411h3M385 411h1M387 411h1M92 412h1M158 412h3M177 412h1M192 412h3M217 412h1M284 412h3M303 412h1M318 412h3M386 412h1M93 413h1M161 413h2M177 413h1M194 413h5M216 413h1M279 413h5M286 413h1M303 413h1M315 413h3M385 413h1M94 414h1M163 414h2M177 414h1M194 414h1M199 414h6M216 414h1M273 414h6M287 414h1M303 414h1M313 414h2M384 414h1M95 415h1M165 415h2M176 415h1M193 415h1M205 415h7M216 415h1M267 415h6M287 415h1M304 415h1M311 415h2M382 415h2M96 416h2M167 416h3M176 416h1M193 416h1M209 416h1M212 416h6M260 416h7M271 416h1M287 416h1M304 416h1M309 416h2M381 416h1M98 417h1M170 417h3M175 417h1M193 417h1M209 417h1M218 417h6M254 417h6M271 417h1M287 417h1M305 417h4M380 417h1M99 418h1M173 418h3M192 418h1M209 418h1M224 418h30M255 418h1M271 418h1M288 418h1M303 418h3M379 418h1M100 419h2M175 419h2M192 419h1M208 419h1M225 419h1M239 419h1M255 419h1M272 419h1M288 419h1M301 419h2M377 419h2M102 420h1M175 420h1M177 420h2M192 420h1M208 420h1M225 420h1M239 420h1M255 420h1M272 420h1M288 420h1M299 420h2M376 420h1M103 421h1M175 421h1M179 421h3M192 421h1M208 421h1M225 421h1M239 421h1M255 421h1M272 421h1M288 421h1M297 421h2M375 421h1M104 422h2M174 422h1M182 422h4M191 422h1M208 422h1M225 422h1M239 422h1M255 422h1M272 422h1M289 422h1M293 422h4M373 422h2M106 423h1M174 423h1M186 423h4M191 423h1M208 423h1M225 423h1M239 423h1M255 423h1M272 423h1M288 423h5M372 423h1M107 424h2M173 424h1M190 424h5M208 424h1M224 424h1M239 424h1M256 424h1M273 424h1M284 424h4M370 424h2M109 425h1M173 425h1M195 425h4M207 425h1M224 425h1M239 425h1M256 425h1M273 425h1M280 425h4M369 425h1M110 426h2M173 426h1M199 426h4M207 426h1M224 426h1M239 426h1M256 426h1M273 426h1M275 426h5M367 426h2M112 427h1M172 427h1M203 427h7M224 427h1M239 427h1M256 427h1M269 427h6M366 427h1M113 428h2M172 428h1M210 428h6M224 428h1M239 428h1M256 428h1M262 428h7M273 428h1M364 428h2M115 429h2M172 429h1M216 429h7M224 429h1M239 429h1M256 429h6M273 429h1M362 429h2M117 430h2M171 430h1M223 430h33M273 430h1M360 430h2M119 431h1M171 431h1M274 431h1M359 431h1M120 432h2M170 432h1M274 432h1M357 432h2M122 433h1M170 433h1M274 433h1M356 433h1M123 434h1M170 434h1M274 434h1M355 434h1M124 435h2M169 435h1M274 435h1M353 435h2M126 436h2M169 436h1M274 436h1M351 436h2M128 437h2M169 437h1M275 437h1M349 437h2M130 438h2M168 438h1M275 438h1M347 438h2M132 439h2M168 439h1M275 439h1M345 439h2M134 440h2M167 440h1M275 440h1M343 440h2M136 441h2M167 441h1M275 441h1M341 441h2M138 442h2M167 442h1M275 442h1M339 442h2M140 443h2M166 443h1M276 443h1M337 443h2M142 444h2M166 444h1M276 444h1M335 444h2M144 445h2M166 445h1M276 445h1M333 445h2M146 446h3M165 446h1M276 446h1M330 446h3M149 447h2M165 447h1M276 447h1M328 447h2M151 448h2M164 448h1M277 448h1M326 448h2M153 449h3M164 449h1M277 449h1M323 449h3M156 450h2M164 450h1M277 450h1M320 450h3M158 451h3M163 451h1M277 451h1M318 451h2M161 452h3M277 452h1M315 452h3M164 453h2M277 453h1M313 453h2M166 454h2M278 454h1M311 454h2M168 455h3M278 455h1M307 455h4M171 456h4M278 456h1M303 456h4M175 457h4M278 457h1M300 457h3M179 458h4M278 458h1M296 458h4M183 459h3M278 459h1M292 459h4M186 460h4M279 460h1M288 460h4M190 461h4M279 461h1M284 461h4M194 462h4M279 462h5M198 463h6M274 463h6M204 464h8M266 464h8M212 465h16M250 465h16M228 466h22"/>
<path fill="none" stroke="#bfbfbf" stroke-width="1" transform="translate(0,0.5)" d="M148 20h1M148 21h1M149 22h1M149 23h1M150 24h1M150 25h1M150 26h1M151 27h1M151 28h1M152 29h1M153 31h1M153 32h1M153 33h1M154 34h1M154 35h1M155 36h1M155 37h1M155 38h1M156 39h1M156 40h1M157 41h1M157 42h1M158 43h1M158 44h1M158 45h1M159 46h1M159 47h1M160 48h1M160 49h1M160 50h1M161 51h1M161 52h1M162 53h1M162 54h1M163 55h1M163 56h1M163 57h1M164 58h1M164 59h1M165 60h1M165 61h1M165 62h1M166 64h1M167 65h1M167 66h1M168 67h1M168 68h1M168 69h1M169 70h1M169 71h1M170 72h1M170 73h1M171 75h1M172 77h1M173 79h1M174 82h1M175 84h1M177 89h1M178 91h1M180 96h1M180 97h1M180 98h1M181 99h1M181 100h1M182 101h1M182 102h1M182 103h1M183 104h1M183 105h1M184 106h1M184 107h1M185 108h1M185 109h1M185 110h1M186 111h1M186 112h1M187 113h1M187 114h1M187 115h1M188 116h1M188 117h1M189 118h1M189 119h1M190 120h1M190 121h1M190 122h1M191 123h1M191 124h1M192 125h1M192 126h1M192 127h1M193 128h1M193 129h1M194 130h1M194 131h1M195 132h1M195 133h1M195 134h1M196 135h1M196 136h1M197 137h1M197 138h1M197 139h1M198 140h1M198 141h1M199 142h1M199 143h1M200 144h1M200 145h1M200 146h1M201 147h1M201 148h1M202 149h1M202 150h1M202 151h1M203 152h1M204 154h1M204 155h1M205 156h1M205 157h1M205 158h1M206 159h1M206 160h1M207 161h1M207 162h1M207 163h1M208 164h1M208 165h1M209 166h1M209 167h1M209 168h1M210 169h1M210 170h1M211 171h1M212 173h1M212 174h1M212 175h1M213 176h1M213 177h1M214 178h1M214 179h1M214 180h1M215 181h1M215 182h1M216 183h1M216 184h1M217 185h1M217 186h1M217 187h1M218 188h1M218 189h1M219 190h1M219 191h1M219 192h1M220 193h1M220 194h1M221 195h1M221 196h1M222 197h1M222 198h1M222 199h1M223 200h1M223 201h1M224 202h1M224 203h1M224 204h1M225 205h1M225 206h1M226 207h1M226 208h1M227 209h1M227 210h1M227 211h1M228 212h1M228 213h1M229 214h1M229 215h1M229 216h1M230 217h1M230 218h1M231 219h1M231 220h1M232 221h1M232 222h1M232 223h1M233 224h1M233 225h1M234 226h1M234 227h1M234 228h1M235 229h1M235 230h1M236 231h1M236 232h1M237 233h1M237 234h1M237 235h1M238 236h1M238 237h1M239 238h1M2 239h10M13 239h35M85 239h50M136 239h43M180 239h56M237 239h2M240 239h100M342 239h3M346 239h48M431 239h35M467 239h10M239 240h1M240 241h1M240 242h1M241 243h1M241 244h1M242 246h1M242 247h1M243 248h1M243 249h1M244 250h1M244 251h1M244 252h1M245 253h1M245 254h1M246 255h1M246 256h1M246 257h1M247 258h1M247 259h1M248 260h1M248 261h1M249 262h1M249 263h1M249 264h1M250 265h1M250 266h1M251 267h1M251 268h1M251 269h1M252 270h1M252 271h1M253 272h1M253 273h1M254 274h1M254 275h1M254 276h1M255 277h1M255 278h1M256 279h1M256 280h1M256 281h1M257 282h1M257 283h1M258 284h1M258 285h1M259 286h1M259 287h1M259 288h1M260 289h1M260 290h1M261 291h1M261 292h1M261 293h1M262 295h1M263 296h1M263 297h1M264 298h1M264 299h1M264 300h1M265 301h1M265 302h1M266 303h1M266 304h1M266 305h1M267 306h1M267 307h1M268 308h1M268 309h1M269 310h1M269 311h1M269 312h1M270 314h1M271 315h1M271 316h1M271 317h1M272 318h1M272 319h1M273 320h1M273 321h1M273 322h1M274 324h1M275 325h1M275 326h1M276 327h1M276 328h1M276 329h1M277 330h1M277 331h1M278 332h1M278 333h1M279 335h1M279 336h1M280 337h1M280 338h1M281 339h1M281 340h1M281 341h1M282 342h1M282 343h1M283 344h1M283 345h1M283 346h1M284 347h1M284 348h1M285 349h1M285 350h1M286 351h1M286 352h1M286 353h1M287 354h1M287 355h1M288 356h1M288 357h1M288 358h1M289 359h1M289 360h1M290 361h1M290 362h1M291 363h1M291 364h1M291 365h1M292 366h1M292 367h1M293 368h1M293 369h1M293 370h1M294 371h1M294 372h1M295 373h1M295 374h1M296 375h1M296 376h1M296 377h1M297 378h1M297 379h1M298 380h1M298 381h1M298 382h1M300 387h1M301 389h1M303 394h1M304 396h1M305 399h1M306 401h1M307 403h1M308 405h1M308 406h1M309 407h1M309 408h1M310 409h1M310 410h1M310 411h1M311 412h1M311 413h1M312 414h1M313 416h1M313 417h1M313 418h1M314 419h1M314 420h1M315 421h1M315 422h1M315 423h1M316 424h1M316 425h1M317 426h1M317 427h1M318 428h1M318 429h1M318 430h1M319 431h1M319 432h1M320 433h1M320 434h1M320 435h1M321 436h1M321 437h1M322 438h1M322 439h1M323 440h1M323 441h1M323 442h1M324 443h1M324 444h1M325 445h1M325 446h1M325 447h1M326 449h1M327 450h1M327 451h1M328 452h1M328 453h1M328 454h1M329 455h1M329 456h1M330 457h1M330 458h1"/>
<path fill="none" stroke="#00ff00" stroke-width="1" transform="translate(0,0.5)" d="M254 26h5M253 27h1M259 27h1M252 28h1M260 28h1M252 29h1M260 29h1M252 30h1M260 30h1M253 31h1M259 31h1M248 32h7M258 32h7M248 36h17M378 80h1M382 80h1M379 81h3M378 82h1M382 82h1M378 83h1M382 83h1M378 84h1M382 84h1M379 85h3M380 86h1M378 87h5M380 88h1M160 108h1M168 108h1M161 109h1M167 109h1M162 110h5M161 111h1M167 111h1M160 112h1M168 112h1M160 113h1M168 113h1M160 114h1M168 114h1M160 115h1M168 115h1M160 116h1M168 116h1M161 117h1M167 117h1M162 118h5M164 119h1M164 120h1M164 121h1M160 122h9M164 123h1M164 124h1M105 131h1M111 131h1M106 132h1M110 132h1M106 133h1M108 133h1M110 133h1M106 134h5M106 135h1M108 135h1M110 135h1M105 136h1M108 136h1M111 136h1M177 136h1M107 137h3M176 137h3M107 138h1M109 138h1M177 138h1M108 139h1M179 141h1M181 142h1M183 143h1M179 144h1M185 144h1M187 145h1M189 146h1M179 147h1M191 147h1M193 148h1M195 149h1M180 150h1M197 150h1M199 151h1M201 152h1M163 153h1M180 153h1M203 153h1M205 154h1M163 155h1M167 155h1M207 155h1M171 156h1M180 156h1M209 156h1M625 156h2M630 156h2M164 157h1M211 157h1M624 157h1M627 157h1M629 157h1M632 157h1M175 158h1M213 158h1M624 158h1M627 158h1M629 158h1M632 158h1M164 159h1M179 159h2M215 159h1M625 159h1M627 159h1M629 159h1M631 159h1M217 160h1M628 160h1M164 161h1M183 161h1M219 161h1M628 161h1M180 162h1M221 162h1M628 162h1M165 163h1M187 163h1M628 163h1M191 164h1M223 164h1M628 164h1M165 165h1M181 165h1M225 165h1M195 166h1M227 166h1M166 167h1M229 167h1M181 168h1M199 168h1M231 168h1M165 169h2M203 169h1M233 169h1M235 170h1M166 171h1M181 171h1M207 171h1M237 171h1M211 172h1M239 172h1M166 173h2M241 173h1M181 174h1M215 174h1M243 174h1M167 175h1M245 175h1M219 176h1M247 176h1M167 177h1M181 177h1M223 177h1M249 177h1M251 178h1M168 179h1M227 179h1M253 179h1M182 180h1M255 180h1M167 181h2M231 181h1M257 181h1M235 182h1M259 182h1M140 183h1M169 183h1M182 183h1M261 183h1M239 184h1M263 184h1M168 185h2M243 185h1M265 185h1M142 186h1M182 186h1M267 186h1M169 187h1M247 187h1M269 187h1M271 188h1M143 189h1M168 189h1M170 189h1M182 189h1M251 189h1M273 189h1M255 190h1M275 190h1M170 191h1M277 191h1M145 192h1M182 192h1M259 192h1M279 192h1M169 193h2M281 193h1M263 194h1M283 194h1M147 195h1M171 195h1M182 195h1M267 195h1M285 195h1M287 196h1M170 197h2M271 197h1M289 197h1M627 197h3M149 198h1M183 198h1M275 198h1M291 198h1M625 198h2M630 198h2M172 199h1M293 199h1M624 199h1M629 199h1M632 199h1M279 200h1M295 200h1M625 200h2M629 200h1M632 200h1M151 201h1M170 201h1M172 201h1M183 201h1M297 201h1M624 201h1M627 201h1M630 201h2M283 202h1M299 202h1M624 202h1M627 202h1M632 202h1M172 203h1M287 203h1M301 203h1M625 203h2M630 203h2M153 204h1M183 204h1M303 204h1M627 204h3M171 205h1M173 205h1M291 205h1M305 205h1M295 206h1M307 206h1M155 207h1M173 207h1M183 207h1M309 207h1M299 208h1M172 209h2M311 209h1M157 210h1M183 210h1M303 210h1M313 210h1M174 211h1M307 211h1M315 211h1M317 212h1M159 213h1M172 213h1M174 213h1M184 213h1M311 213h1M319 213h1M321 214h1M175 215h1M315 215h1M323 215h1M161 216h1M184 216h1M319 216h1M325 216h1M173 217h1M175 217h1M327 217h1M323 218h1M329 218h1M162 219h1M175 219h1M184 219h1M327 219h1M331 219h1M333 220h1M173 221h1M176 221h1M331 221h1M335 221h1M164 222h1M184 222h1M337 222h1M176 223h1M335 223h1M339 223h1M339 224h1M341 224h1M166 225h1M174 225h1M176 225h1M184 225h1M343 225h1M343 226h1M345 226h1M177 227h1M347 227h1M168 228h1M185 228h1M347 228h1M349 228h1M175 229h1M177 229h1M351 229h1M170 231h1M177 231h1M185 231h1M351 231h1M350 232h1M175 233h1M178 233h1M349 233h1M172 234h1M185 234h1M347 234h2M178 235h1M346 235h2M344 236h2M630 236h3M174 237h1M176 237h1M179 237h1M185 237h1M343 237h2M631 237h2M341 238h2M630 238h1M632 238h1M179 239h1M340 239h2M625 239h1M629 239h1M176 240h1M185 240h1M339 240h1M626 240h1M628 240h1M176 241h1M179 241h1M337 241h2M627 241h1M336 242h1M626 242h1M628 242h1M178 243h1M180 243h1M186 243h1M334 243h2M625 243h1M629 243h1M333 244h1M335 244h1M624 244h1M177 245h1M180 245h1M331 245h2M180 246h1M186 246h1M330 246h1M332 246h1M180 247h1M329 247h1M327 248h3M178 249h1M181 249h1M186 249h1M326 249h1M324 250h2M181 251h1M323 251h1M326 251h1M183 252h1M186 252h1M321 252h2M178 253h1M182 253h1M320 253h1M323 253h1M319 254h1M182 255h1M185 255h2M317 255h2M320 255h1M316 256h1M179 257h1M182 257h1M314 257h2M317 257h1M187 258h1M313 258h1M183 259h1M311 259h2M310 260h1M314 260h1M179 261h1M183 261h1M187 261h1M189 261h1M309 261h1M307 262h2M311 262h1M128 263h1M183 263h1M306 263h1M130 264h1M187 264h1M191 264h1M304 264h2M308 264h1M132 265h1M134 265h1M180 265h1M184 265h1M303 265h1M136 266h1M301 266h2M305 266h1M138 267h1M184 267h1M187 267h1M193 267h1M300 267h1M140 268h1M142 268h1M299 268h1M144 269h1M181 269h1M185 269h1M297 269h2M302 269h1M146 270h1M148 270h1M187 270h1M195 270h1M296 270h1M150 271h1M185 271h1M294 271h2M299 271h1M152 272h1M154 272h1M293 272h1M156 273h1M181 273h1M185 273h1M187 273h1M197 273h1M292 273h1M296 273h1M158 274h1M290 274h2M160 275h1M162 275h1M186 275h1M289 275h1M164 276h1M188 276h1M199 276h1M287 276h2M293 276h1M166 277h1M168 277h1M182 277h1M186 277h1M286 277h1M170 278h1M284 278h2M290 278h1M172 279h1M186 279h1M188 279h1M200 279h1M283 279h1M174 280h1M176 280h1M282 280h1M287 280h1M178 281h1M183 281h1M187 281h1M280 281h2M180 282h1M182 282h1M188 282h1M202 282h1M279 282h1M284 282h1M184 283h1M187 283h1M277 283h2M186 284h1M188 284h1M276 284h1M397 284h1M401 284h1M183 285h1M187 285h2M190 285h1M204 285h1M274 285h2M281 285h1M398 285h3M192 286h1M273 286h1M397 286h1M401 286h1M626 286h1M630 286h1M188 287h1M194 287h1M196 287h1M272 287h1M278 287h1M397 287h1M401 287h1M627 287h3M188 288h1M198 288h1M206 288h1M270 288h2M397 288h1M401 288h1M626 288h1M630 288h1M184 289h1M188 289h1M200 289h1M202 289h1M269 289h1M275 289h1M398 289h3M626 289h1M630 289h1M204 290h1M267 290h2M399 290h1M626 290h1M630 290h1M189 291h1M206 291h1M208 291h1M266 291h1M397 291h5M627 291h3M210 292h1M264 292h2M272 292h1M399 292h1M628 292h1M184 293h1M189 293h1M212 293h1M263 293h1M626 293h5M189 294h1M210 294h1M214 294h1M216 294h1M262 294h1M269 294h1M628 294h1M189 295h1M218 295h1M260 295h2M220 296h1M222 296h1M259 296h1M266 296h1M185 297h1M189 297h2M212 297h1M224 297h1M257 297h2M226 298h1M228 298h1M256 298h1M263 298h1M36 299h1M42 299h1M190 299h1M230 299h1M254 299h2M37 300h1M41 300h1M189 300h1M214 300h1M232 300h1M253 300h1M37 301h1M39 301h1M41 301h1M186 301h1M190 301h1M234 301h1M236 301h1M252 301h1M260 301h1M37 302h5M238 302h1M250 302h2M37 303h1M39 303h1M41 303h1M189 303h1M191 303h1M216 303h1M240 303h1M242 303h1M249 303h1M257 303h1M36 304h1M39 304h1M42 304h1M244 304h1M247 304h2M38 305h3M186 305h1M191 305h1M246 305h1M254 305h1M38 306h1M40 306h1M190 306h1M218 306h1M245 306h1M248 306h1M250 306h1M39 307h1M192 307h1M243 307h2M251 307h2M242 308h1M254 308h1M256 308h1M187 309h1M190 309h1M192 309h1M219 309h1M240 309h2M258 309h1M239 310h1M248 310h1M260 310h1M262 310h1M192 311h1M237 311h2M264 311h1M190 312h1M221 312h1M236 312h1M245 312h1M266 312h1M187 313h1M193 313h1M235 313h1M268 313h1M270 313h1M233 314h2M242 314h1M272 314h1M190 315h1M193 315h1M223 315h1M232 315h1M274 315h1M276 315h1M230 316h2M278 316h1M188 317h1M193 317h1M229 317h1M239 317h1M280 317h1M282 317h1M190 318h1M225 318h1M227 318h2M284 318h1M194 319h1M226 319h1M236 319h1M286 319h1M45 320h1M51 320h1M57 320h1M225 320h1M288 320h1M290 320h1M44 321h2M50 321h2M56 321h1M189 321h1M191 321h1M194 321h1M223 321h2M227 321h1M233 321h1M292 321h1M44 322h1M46 322h1M50 322h1M52 322h1M56 322h1M222 322h1M294 322h1M296 322h1M43 323h1M46 323h1M49 323h1M52 323h1M55 323h1M195 323h1M220 323h2M230 323h1M298 323h1M42 324h1M46 324h1M48 324h1M52 324h1M54 324h1M191 324h1M219 324h1M229 324h1M300 324h1M302 324h1M42 325h1M47 325h2M53 325h2M189 325h1M195 325h1M217 325h2M304 325h1M41 326h1M47 326h1M53 326h1M216 326h1M227 326h1M306 326h1M191 327h1M195 327h1M215 327h1M231 327h1M308 327h1M310 327h1M213 328h2M224 328h1M190 329h1M196 329h1M212 329h1M45 330h1M51 330h1M57 330h1M191 330h1M210 330h2M221 330h1M233 330h1M315 330h1M44 331h2M50 331h2M56 331h1M196 331h1M209 331h1M314 331h3M44 332h1M46 332h1M50 332h1M52 332h1M56 332h1M207 332h2M315 332h1M43 333h1M46 333h1M49 333h1M52 333h1M55 333h1M190 333h2M196 333h1M206 333h1M218 333h1M235 333h1M42 334h1M46 334h1M48 334h1M52 334h1M54 334h1M205 334h1M42 335h1M47 335h2M53 335h2M197 335h1M203 335h2M215 335h1M41 336h1M47 336h1M53 336h1M192 336h1M202 336h1M237 336h1M625 336h1M631 336h1M191 337h1M197 337h1M200 337h2M212 337h1M626 337h1M630 337h1M199 338h1M626 338h1M628 338h1M630 338h1M192 339h1M197 339h2M209 339h1M238 339h1M626 339h5M196 340h1M626 340h1M628 340h1M630 340h1M192 341h1M195 341h1M198 341h1M625 341h1M628 341h1M631 341h1M192 342h3M206 342h1M240 342h1M324 342h1M336 342h1M627 342h3M192 343h1M198 343h1M325 343h1M335 343h1M627 343h1M629 343h1M203 344h1M326 344h1M334 344h1M628 344h1M199 345h1M242 345h1M326 345h1M334 345h1M200 346h1M326 346h1M330 346h1M334 346h1M199 347h1M326 347h1M330 347h1M334 347h1M244 348h1M326 348h9M326 349h1M330 349h1M334 349h1M326 350h1M330 350h1M334 350h1M405 350h1M419 350h1M246 351h1M325 351h1M330 351h1M335 351h1M406 351h1M418 351h1M324 352h1M330 352h1M336 352h1M407 352h11M330 353h1M409 353h1M415 353h1M248 354h1M329 354h3M409 354h1M415 354h1M328 355h1M332 355h1M409 355h1M415 355h1M328 356h1M332 356h1M409 356h1M415 356h1M328 357h1M332 357h1M409 357h1M415 357h1M329 358h3M409 358h1M415 358h1M409 359h1M415 359h1M409 360h1M415 360h1M409 361h1M415 361h1M409 362h1M415 362h1M409 363h1M415 363h1M407 364h11M406 365h1M418 365h1M405 366h1M419 366h1M392 376h1M396 376h1M393 377h3M392 378h1M396 378h1M392 379h1M396 379h1M392 380h1M396 380h1M393 381h3M394 382h1M392 383h5M394 384h1M237 403h1M241 403h1M238 404h3M237 405h1M241 405h1M237 406h1M241 406h1M237 407h1M241 407h1M238 408h3M239 409h1M237 410h5M239 411h1"/>
<path fill="none" stroke="#ffff00" stroke-width="1" transform="translate(0,0.5)" d="M282 30h3M281 31h1M285 31h1M281 32h1M285 32h1M281 33h1M285 33h1M282 34h3M283 35h1M281 36h5M283 37h1M283 38h1M350 59h1M354 59h1M358 59h1M351 60h1M353 60h1M355 60h1M357 60h1M359 60h1M352 61h1M356 61h1M360 61h1M364 61h1M352 62h1M356 62h1M360 62h1M363 62h2M352 63h1M356 63h1M360 63h1M362 63h1M364 63h1M352 64h1M356 64h1M360 64h2M364 64h1M352 65h1M356 65h1M360 65h1M364 65h1M352 66h1M356 66h1M360 66h1M364 66h1M352 67h1M356 67h1M360 67h1M364 67h1M352 68h1M356 68h1M360 68h1M364 68h1M352 69h1M356 69h1M360 69h1M364 69h1M352 70h1M356 70h1M360 70h1M364 70h1M352 71h1M356 71h1M360 71h1M364 71h1M352 72h1M356 72h1M361 72h1M363 72h1M352 73h1M356 73h1M362 73h1M361 74h1M363 74h1M360 75h1M364 75h1M158 88h1M156 89h5M158 90h1M158 91h1M160 91h2M158 92h2M162 92h1M158 93h1M162 93h1M158 94h1M161 94h1M158 95h1M161 95h1M162 96h1M142 123h5M141 124h1M147 124h1M140 125h1M148 125h1M140 126h1M148 126h1M140 127h1M148 127h1M140 128h1M148 128h1M140 129h1M148 129h1M141 130h1M147 130h1M142 131h5M144 132h1M144 133h1M144 134h1M140 135h9M144 136h1M144 137h1M144 138h1M144 139h1M624 146h1M632 146h1M625 147h1M631 147h1M160 148h1M626 148h1M630 148h1M159 149h3M626 149h1M630 149h1M160 150h1M624 150h9M626 151h1M630 151h1M626 152h1M630 152h1M625 153h1M631 153h1M624 154h1M632 154h1M625 186h1M632 186h1M626 187h6M627 188h1M630 188h1M627 189h1M630 189h1M627 190h1M630 190h1M33 191h1M627 191h1M630 191h1M31 192h5M627 192h1M630 192h1M33 193h1M626 193h6M33 194h1M35 194h2M625 194h1M632 194h1M33 195h2M37 195h1M33 196h1M37 196h1M33 197h1M36 197h1M33 198h1M36 198h1M37 199h1M403 204h3M402 205h1M406 205h1M402 206h1M406 206h1M402 207h1M406 207h1M403 208h3M404 209h1M402 210h5M404 211h1M404 212h1M24 214h1M30 214h1M34 214h3M23 215h2M30 215h2M33 215h1M37 215h1M22 216h1M24 216h1M30 216h1M32 216h1M38 216h1M24 217h1M29 217h1M31 217h1M38 217h1M24 218h1M28 218h1M32 218h1M38 218h1M24 219h1M28 219h1M33 219h1M37 219h1M24 220h1M28 220h1M34 220h1M36 220h1M24 221h1M28 221h1M35 221h1M24 222h1M28 222h1M36 222h1M25 223h1M27 223h1M37 223h1M26 224h1M38 224h1M26 225h1M38 225h1M26 226h1M38 226h1M624 226h1M626 226h1M628 226h1M26 227h1M38 227h1M625 227h1M627 227h1M629 227h1M26 228h1M38 228h1M625 228h1M627 228h1M629 228h1M37 229h1M625 229h1M627 229h1M629 229h1M36 230h1M625 230h1M627 230h1M629 230h1M625 231h1M627 231h1M629 231h1M625 232h1M627 232h1M629 232h1M632 232h1M625 233h1M627 233h1M629 233h1M632 233h1M630 234h2M627 296h3M626 297h1M630 297h1M626 298h1M630 298h1M626 299h1M630 299h1M627 300h3M628 301h1M626 302h5M628 303h1M628 304h1M627 326h1M625 327h5M627 328h1M627 329h1M629 329h2M627 330h2M631 330h1M627 331h1M631 331h1M627 332h1M630 332h1M627 333h1M630 333h1M631 334h1M195 345h1M198 346h1M190 347h1M189 348h3M190 349h1M173 359h1M173 360h1M169 361h9M173 362h1M173 363h1M173 364h1M173 365h1M177 365h3M173 366h1M176 366h1M180 366h1M173 367h3M181 367h1M136 368h3M173 368h1M181 368h1M135 369h1M139 369h1M173 369h1M181 369h1M135 370h1M139 370h1M173 370h1M180 370h1M135 371h1M139 371h1M173 371h1M179 371h1M136 372h3M173 372h1M179 372h1M137 373h1M173 373h1M179 373h1M135 374h5M180 374h1M137 375h1M181 375h1M137 376h1M322 421h1M334 421h1M323 422h1M333 422h1M323 423h1M333 423h1M324 424h2M331 424h2M326 425h5M324 426h2M331 426h2M323 427h1M333 427h1M323 428h1M333 428h1M322 429h1M334 429h1M322 430h1M334 430h1M322 431h1M334 431h1M322 432h1M334 432h1M322 433h1M334 433h1M323 434h1M333 434h1M302 435h3M323 435h1M333 435h1M301 436h1M305 436h1M324 436h2M331 436h2M301 437h1M305 437h1M326 437h5M301 438h1M305 438h1M302 439h3M303 440h1M301 441h5M303 442h1M303 443h1"/>
<path fill="none" stroke="#0000ff" stroke-width="1" transform="translate(0,0.5)" d="M172 35h1M175 35h1M178 35h1M172 36h1M174 36h1M176 36h1M178 36h1M172 37h1M175 37h1M178 37h1M173 38h1M177 38h1M174 39h3M175 40h1M142 41h1M146 41h1M150 41h1M173 41h5M143 42h1M145 42h1M147 42h1M149 42h1M151 42h1M175 42h1M144 43h1M148 43h1M152 43h1M175 43h1M144 44h1M148 44h1M152 44h1M144 45h1M148 45h1M152 45h1M144 46h1M148 46h1M152 46h1M144 47h1M148 47h1M152 47h1M144 48h1M148 48h1M152 48h1M144 49h1M148 49h1M152 49h1M144 50h1M148 50h1M152 50h1M144 51h1M148 51h1M152 51h1M144 52h1M148 52h1M152 52h1M157 52h1M144 53h1M148 53h1M152 53h1M156 53h3M144 54h1M148 54h1M152 54h1M157 54h1M144 55h1M148 55h1M152 55h1M157 55h1M153 56h1M156 56h1M154 57h2M338 102h1M341 102h1M344 102h1M338 103h1M340 103h1M342 103h1M344 103h1M338 104h1M341 104h1M344 104h1M339 105h1M343 105h1M340 106h3M341 107h1M339 108h5M341 109h1M341 110h1M165 155h1M166 157h1M168 159h1M170 161h1M172 163h1M173 165h1M625 166h1M631 166h1M175 167h1M626 167h1M630 167h1M627 168h3M177 169h1M626 169h1M630 169h1M625 170h1M631 170h1M178 171h1M625 171h1M631 171h1M625 172h1M631 172h1M180 173h1M626 173h1M630 173h1M627 174h3M182 175h1M183 177h1M185 179h1M187 181h1M189 183h1M190 185h1M76 186h1M79 186h1M82 186h1M75 187h2M78 187h3M82 187h2M192 187h1M76 188h1M79 188h1M82 188h1M77 189h1M79 189h1M81 189h1M194 189h1M78 190h3M79 191h1M195 191h1M77 192h5M79 193h1M197 193h1M79 194h1M199 195h1M200 197h1M202 199h1M204 201h1M206 203h1M207 205h1M624 206h1M626 206h1M628 206h1M209 207h1M625 207h1M627 207h1M629 207h1M631 207h1M625 208h1M627 208h1M629 208h3M211 209h1M625 209h1M627 209h1M629 209h1M631 209h1M625 210h1M627 210h1M629 210h1M631 210h1M212 211h1M625 211h1M627 211h1M629 211h1M631 211h1M625 212h1M627 212h1M629 212h1M631 212h1M214 213h1M625 213h1M627 213h1M630 213h1M629 214h1M631 214h1M216 215h1M217 217h1M219 219h1M221 221h1M223 223h1M224 225h1M226 227h1M228 229h1M229 231h1M231 233h1M233 235h1M235 237h1M236 239h1M238 241h1M240 243h1M241 245h1M630 246h3M243 247h1M631 247h2M630 248h1M632 248h1M245 249h1M446 249h5M625 249h1M629 249h1M443 250h3M451 250h1M626 250h1M628 250h1M246 251h1M442 251h1M452 251h3M627 251h1M441 252h1M451 252h1M455 252h1M626 252h1M628 252h1M248 253h1M440 253h1M450 253h1M456 253h1M625 253h1M629 253h1M450 254h1M456 254h1M624 254h1M250 255h1M442 255h3M450 255h1M456 255h1M441 256h1M445 256h1M451 256h1M455 256h1M252 257h1M440 257h1M446 257h1M452 257h3M440 258h1M446 258h1M253 259h1M440 259h1M446 259h1M456 259h1M441 260h1M445 260h1M455 260h1M93 261h1M98 261h3M105 261h1M255 261h1M442 261h3M454 261h1M93 262h1M97 262h1M101 262h1M105 262h1M445 262h1M451 262h3M93 263h1M97 263h1M101 263h1M105 263h1M122 263h1M257 263h1M446 263h5M93 264h1M97 264h1M101 264h1M105 264h1M121 264h3M93 265h1M98 265h3M105 265h1M122 265h1M258 265h1M94 266h1M104 266h1M94 267h1M104 267h1M260 267h1M95 268h2M102 268h2M97 269h5M262 269h1M99 270h1M99 271h1M263 271h1M99 272h1M95 273h9M265 273h1M99 274h1M99 275h1M267 275h1M99 276h1M626 276h3M99 277h1M269 277h1M625 277h1M629 277h2M626 278h1M630 278h1M270 279h1M442 279h3M627 279h1M631 279h1M441 280h1M445 280h2M627 280h1M631 280h1M272 281h1M442 281h1M446 281h1M627 281h1M631 281h1M443 282h1M447 282h1M626 282h1M630 282h1M274 283h1M443 283h1M447 283h1M625 283h1M629 283h2M443 284h1M447 284h1M626 284h3M442 285h1M446 285h1M441 286h1M445 286h2M277 287h1M442 287h3M279 289h1M280 291h1M282 293h1M284 295h1M286 297h1M287 299h1M289 301h1M292 305h1M294 307h1M296 309h1M298 311h1M299 313h1M301 315h1M303 317h1M304 319h1M306 321h1M308 323h1M309 325h1M311 327h1M625 346h1M628 346h1M631 346h1M624 347h2M627 347h3M631 347h2M625 348h1M628 348h1M631 348h1M626 349h1M628 349h1M630 349h1M198 350h1M627 350h3M197 351h3M628 351h1M198 352h1M626 352h5M628 353h1M628 354h1M625 356h1M628 356h1M631 356h1M248 357h1M625 357h1M627 357h1M629 357h1M631 357h1M247 358h3M625 358h1M628 358h1M631 358h1M248 359h1M626 359h1M630 359h1M627 360h3M628 361h1M626 362h5M628 363h1M628 364h1M186 367h1M192 367h1M198 367h1M186 368h1M192 368h1M198 368h1M185 369h3M190 369h5M197 369h3M186 370h1M192 370h1M198 370h1M186 371h1M192 371h1M198 371h1M187 372h1M192 372h1M197 372h1M187 373h1M192 373h1M197 373h1M188 374h2M192 374h1M195 374h2M246 374h5M190 375h5M245 375h1M251 375h2M192 376h1M244 376h1M253 376h1M192 377h1M245 377h1M254 377h1M192 378h1M246 378h1M255 378h1M188 379h9M247 379h1M255 379h1M192 380h1M247 380h1M256 380h1M192 381h1M248 381h1M256 381h1M192 382h1M248 382h1M256 382h1M317 382h3M192 383h1M248 383h1M256 383h1M316 383h1M320 383h2M247 384h1M256 384h1M317 384h1M321 384h1M247 385h1M255 385h1M318 385h1M322 385h1M246 386h1M255 386h1M318 386h1M322 386h1M245 387h1M254 387h1M318 387h1M322 387h1M244 388h1M253 388h1M317 388h1M321 388h1M245 389h1M251 389h2M316 389h1M320 389h2M95 390h1M98 390h1M101 390h1M246 390h5M317 390h3M94 391h2M97 391h3M101 391h2M95 392h1M98 392h1M101 392h1M96 393h1M98 393h1M100 393h1M97 394h3M98 395h1M96 396h5M98 397h1M98 398h1M112 403h1M128 403h1M113 404h1M127 404h1M114 405h1M126 405h1M115 406h1M125 406h1M115 407h1M125 407h1M116 408h1M124 408h1M116 409h1M124 409h1M116 410h1M124 410h1M112 411h17M116 412h1M124 412h1M116 413h1M124 413h1M116 414h1M124 414h1M115 415h1M125 415h1M115 416h1M125 416h1M114 417h1M126 417h1M113 418h1M127 418h1M112 419h1M128 419h1"/>
<path fill="none" stroke="#7f7f7f" stroke-width="1" transform="translate(0,0.5)" d="M225 49h1M229 49h1M232 49h1M235 49h1M241 49h1M244 49h1M247 49h1M251 49h1M219 50h1M225 50h1M229 50h1M232 50h1M235 50h1M241 50h1M244 50h1M247 50h1M251 50h1M257 50h1M261 50h1M212 51h1M215 51h1M219 51h1M225 51h1M229 51h1M232 51h1M235 51h1M241 51h1M244 51h1M247 51h1M251 51h1M257 51h1M261 51h1M264 51h1M267 51h1M209 52h1M212 52h1M215 52h1M219 52h1M225 52h1M229 52h1M232 52h1M235 52h1M241 52h1M244 52h1M247 52h1M251 52h1M257 52h1M261 52h1M264 52h1M267 52h1M274 52h1M199 53h1M202 53h1M209 53h1M212 53h1M216 53h1M219 53h1M225 53h1M229 53h1M232 53h1M235 53h1M241 53h1M244 53h1M247 53h1M251 53h1M257 53h1M261 53h1M264 53h1M267 53h1M274 53h1M277 53h1M196 54h1M199 54h1M202 54h1M209 54h1M212 54h1M216 54h1M219 54h1M225 54h1M229 54h1M232 54h1M235 54h1M241 54h1M244 54h1M247 54h1M251 54h1M257 54h1M261 54h1M264 54h1M267 54h1M274 54h1M277 54h1M280 54h1M192 55h1M196 55h1M199 55h1M203 55h1M209 55h1M212 55h1M216 55h1M220 55h1M226 55h1M229 55h1M232 55h1M235 55h1M241 55h1M244 55h1M247 55h1M250 55h1M256 55h1M260 55h1M264 55h1M267 55h1M273 55h1M277 55h1M280 55h1M284 55h1M186 56h1M193 56h1M196 56h1M200 56h1M203 56h1M209 56h1M213 56h1M216 56h1M220 56h1M226 56h1M229 56h1M232 56h1M235 56h1M241 56h1M244 56h1M247 56h1M250 56h1M256 56h1M260 56h1M263 56h1M266 56h1M273 56h1M276 56h1M279 56h1M283 56h1M290 56h1M183 57h1M186 57h1M193 57h1M197 57h1M200 57h1M203 57h1M210 57h1M213 57h1M216 57h1M220 57h1M226 57h1M229 57h1M232 57h1M235 57h1M241 57h1M244 57h1M247 57h1M250 57h1M256 57h1M260 57h1M263 57h1M266 57h1M273 57h1M276 57h1M279 57h1M283 57h1M290 57h1M293 57h1M180 58h1M183 58h1M187 58h1M193 58h1M197 58h1M200 58h1M203 58h1M210 58h1M213 58h1M216 58h1M220 58h1M226 58h1M229 58h1M232 58h1M235 58h1M241 58h1M244 58h1M247 58h1M250 58h1M256 58h1M260 58h1M263 58h1M266 58h1M273 58h1M276 58h1M279 58h1M283 58h1M289 58h1M293 58h1M297 58h1M180 59h1M184 59h1M187 59h1M193 59h1M197 59h1M200 59h1M203 59h1M210 59h1M213 59h1M217 59h1M220 59h1M226 59h1M229 59h1M232 59h1M235 59h1M241 59h1M244 59h1M247 59h1M250 59h1M256 59h1M260 59h1M263 59h1M266 59h1M273 59h1M276 59h1M279 59h1M282 59h1M289 59h1M292 59h1M297 59h1M300 59h1M176 60h1M181 60h1M184 60h1M187 60h1M194 60h1M197 60h1M200 60h1M203 60h1M210 60h1M213 60h1M217 60h1M220 60h1M256 60h1M260 60h1M263 60h1M266 60h1M272 60h1M276 60h1M279 60h1M282 60h1M289 60h1M292 60h1M296 60h1M300 60h1M177 61h1M181 61h1M184 61h1M188 61h1M194 61h1M197 61h1M201 61h1M204 61h1M210 61h1M213 61h1M217 61h1M263 61h1M266 61h1M272 61h1M275 61h1M279 61h1M282 61h1M288 61h1M292 61h1M296 61h1M299 61h1M170 62h1M177 62h1M181 62h1M185 62h1M188 62h1M194 62h1M198 62h1M201 62h1M204 62h1M210 62h1M272 62h1M275 62h1M278 62h1M282 62h1M288 62h1M291 62h1M295 62h1M299 62h1M306 62h1M167 63h1M170 63h1M178 63h1M182 63h1M185 63h1M188 63h1M194 63h1M198 63h1M201 63h1M204 63h1M275 63h1M278 63h1M281 63h1M288 63h1M291 63h1M295 63h1M298 63h1M305 63h1M309 63h1M167 64h1M171 64h1M178 64h1M182 64h1M185 64h1M188 64h1M195 64h1M198 64h1M281 64h1M288 64h1M291 64h1M295 64h1M298 64h1M305 64h1M308 64h1M312 64h1M164 65h1M168 65h1M171 65h1M178 65h1M182 65h1M185 65h1M189 65h1M287 65h1M291 65h1M294 65h1M298 65h1M304 65h1M308 65h1M311 65h1M161 66h1M165 66h1M168 66h1M172 66h1M179 66h1M182 66h1M186 66h1M189 66h1M287 66h1M290 66h1M294 66h1M297 66h1M304 66h1M307 66h1M311 66h1M315 66h1M162 67h1M165 67h1M169 67h1M172 67h1M179 67h1M183 67h1M186 67h1M290 67h1M293 67h1M297 67h1M304 67h1M307 67h1M310 67h1M314 67h1M155 68h1M162 68h1M166 68h1M169 68h1M172 68h1M180 68h1M183 68h1M293 68h1M296 68h1M303 68h1M307 68h1M310 68h1M314 68h1M321 68h1M156 69h1M163 69h1M166 69h1M169 69h1M173 69h1M180 69h1M296 69h1M303 69h1M306 69h1M310 69h1M313 69h1M320 69h1M324 69h1M152 70h1M156 70h1M163 70h1M166 70h1M170 70h1M173 70h1M302 70h1M306 70h1M309 70h1M313 70h1M320 70h1M324 70h1M153 71h1M157 71h1M163 71h1M167 71h1M170 71h1M174 71h1M302 71h1M305 71h1M309 71h1M312 71h1M319 71h1M323 71h1M326 71h1M150 72h1M153 72h1M157 72h1M164 72h1M167 72h1M171 72h1M305 72h1M308 72h1M312 72h1M319 72h1M323 72h1M326 72h1M330 72h1M150 73h1M154 73h1M158 73h1M164 73h1M168 73h1M308 73h1M311 73h1M319 73h1M322 73h1M325 73h1M329 73h1M147 74h1M151 74h1M154 74h1M158 74h1M165 74h1M168 74h1M311 74h1M318 74h1M322 74h1M325 74h1M329 74h1M147 75h1M151 75h1M155 75h1M159 75h1M165 75h1M318 75h1M321 75h1M324 75h1M328 75h1M148 76h1M152 76h1M155 76h1M159 76h1M317 76h1M321 76h1M324 76h1M328 76h1M335 76h1M141 77h1M148 77h1M152 77h1M156 77h1M160 77h1M317 77h1M320 77h1M323 77h1M327 77h1M335 77h1M141 78h1M149 78h1M153 78h1M156 78h1M320 78h1M323 78h1M327 78h1M334 78h1M338 78h1M138 79h1M142 79h1M149 79h1M153 79h1M157 79h1M322 79h1M326 79h1M334 79h1M338 79h1M342 79h1M135 80h1M138 80h1M143 80h1M150 80h1M154 80h1M322 80h1M326 80h1M333 80h1M337 80h1M341 80h1M136 81h1M139 81h1M143 81h1M150 81h1M154 81h1M325 81h1M333 81h1M336 81h1M341 81h1M344 81h1M132 82h1M136 82h1M140 82h1M144 82h1M151 82h1M332 82h1M336 82h1M340 82h1M343 82h1M133 83h1M137 83h1M140 83h1M145 83h1M332 83h1M335 83h1M339 83h1M343 83h1M133 84h1M138 84h1M141 84h1M145 84h1M331 84h1M334 84h1M339 84h1M342 84h1M134 85h1M138 85h1M142 85h1M146 85h1M334 85h1M338 85h1M341 85h1M349 85h1M135 86h1M139 86h1M142 86h1M333 86h1M337 86h1M341 86h1M349 86h1M353 86h1M127 87h1M135 87h1M140 87h1M143 87h1M259 87h1M337 87h1M340 87h1M348 87h1M352 87h1M124 88h1M128 88h1M136 88h1M140 88h1M336 88h1M340 88h1M347 88h1M351 88h1M125 89h1M129 89h1M137 89h1M259 89h1M339 89h1M347 89h1M351 89h1M354 89h1M126 90h1M130 90h1M137 90h1M346 90h1M350 90h1M354 90h1M122 91h1M126 91h1M130 91h1M138 91h1M258 91h1M345 91h1M349 91h1M353 91h1M357 91h1M119 92h1M123 92h1M127 92h1M131 92h1M345 92h1M348 92h1M352 92h1M356 92h1M120 93h1M124 93h1M128 93h1M132 93h1M258 93h1M344 93h1M348 93h1M352 93h1M356 93h1M121 94h1M125 94h1M129 94h1M133 94h1M347 94h1M351 94h1M355 94h1M121 95h1M125 95h1M129 95h1M258 95h1M346 95h1M350 95h1M354 95h1M363 95h1M113 96h1M122 96h1M126 96h1M130 96h1M350 96h1M353 96h1M362 96h1M114 97h1M123 97h1M127 97h1M258 97h1M349 97h1M353 97h1M361 97h1M366 97h1M111 98h1M115 98h1M124 98h1M128 98h1M352 98h1M360 98h1M365 98h1M112 99h1M116 99h1M124 99h1M257 99h1M351 99h1M359 99h1M364 99h1M368 99h1M113 100h1M117 100h1M125 100h1M359 100h1M363 100h1M367 100h1M109 101h1M114 101h1M118 101h1M257 101h1M358 101h1M362 101h1M366 101h1M370 101h1M110 102h1M115 102h1M119 102h1M357 102h1M361 102h1M365 102h1M369 102h1M106 103h1M111 103h1M115 103h1M120 103h1M257 103h1M356 103h1M360 103h1M364 103h1M368 103h1M107 104h1M112 104h1M116 104h1M359 104h1M364 104h1M367 104h1M108 105h1M113 105h1M117 105h1M257 105h1M363 105h1M366 105h1M109 106h1M114 106h1M118 106h1M362 106h1M366 106h1M375 106h1M110 107h2M115 107h1M256 107h1M361 107h1M365 107h1M374 107h1M101 108h1M112 108h1M116 108h1M364 108h1M373 108h1M102 109h1M113 109h1M256 109h1M363 109h1M372 109h1M377 109h1M99 110h1M103 110h1M114 110h1M371 110h1M376 110h1M100 111h1M104 111h1M256 111h1M371 111h1M375 111h1M380 111h1M97 112h1M101 112h1M105 112h2M370 112h1M374 112h1M379 112h1M98 113h1M102 113h1M107 113h1M255 113h1M369 113h1M373 113h1M378 113h1M382 113h1M99 114h1M103 114h2M108 114h1M368 114h1M372 114h1M376 114h2M381 114h1M95 115h1M100 115h1M105 115h1M109 115h1M255 115h1M371 115h1M375 115h1M380 115h1M96 116h1M101 116h1M106 116h1M370 116h1M374 116h1M379 116h1M97 117h1M102 117h1M107 117h1M255 117h1M373 117h1M378 117h1M98 118h1M103 118h1M372 118h1M377 118h1M99 119h2M104 119h1M255 119h1M376 119h1M386 119h1M101 120h1M375 120h1M384 120h2M91 121h1M102 121h1M254 121h1M383 121h1M92 122h2M103 122h1M382 122h1M387 122h1M94 123h1M254 123h1M380 123h2M386 123h1M89 124h2M95 124h1M379 124h1M384 124h2M390 124h1M86 125h1M91 125h1M96 125h2M254 125h1M378 125h1M383 125h1M388 125h2M87 126h1M92 126h2M98 126h1M382 126h1M387 126h1M88 127h2M94 127h1M99 127h1M254 127h1M381 127h1M386 127h1M391 127h1M90 128h1M95 128h2M380 128h1M384 128h2M390 128h1M85 129h2M91 129h1M97 129h1M253 129h1M383 129h1M388 129h2M87 130h1M92 130h2M382 130h1M387 130h1M88 131h2M94 131h1M253 131h1M386 131h1M90 132h1M95 132h1M385 132h1M396 132h1M91 133h2M129 133h1M253 133h1M384 133h1M394 133h2M81 134h1M93 134h1M393 134h1M82 135h2M131 135h1M253 135h1M353 135h1M391 135h2M398 135h1M79 136h1M84 136h1M390 136h1M396 136h2M80 137h2M85 137h2M133 137h1M252 137h1M351 137h1M388 137h2M395 137h1M82 138h1M87 138h2M387 138h1M393 138h2M398 138h2M77 139h1M83 139h2M89 139h1M135 139h1M252 139h1M349 139h1M392 139h1M397 139h1M78 140h2M85 140h1M347 140h1M390 140h2M395 140h2M80 141h1M86 141h2M137 141h1M252 141h1M394 141h1M400 141h2M81 142h2M88 142h1M345 142h1M392 142h2M399 142h1M76 143h2M83 143h1M139 143h1M252 143h1M391 143h1M397 143h2M78 144h2M84 144h2M343 144h1M396 144h1M80 145h2M141 145h1M251 145h1M394 145h2M82 146h2M143 146h1M341 146h1M393 146h1M84 147h1M251 147h1M403 147h2M72 148h1M145 148h1M339 148h1M401 148h2M73 149h2M251 149h1M399 149h2M406 149h1M75 150h2M147 150h1M337 150h1M397 150h2M404 150h2M70 151h1M77 151h2M251 151h1M335 151h1M396 151h1M402 151h2M71 152h2M79 152h2M149 152h1M400 152h2M408 152h1M73 153h2M81 153h1M250 153h1M333 153h1M398 153h2M406 153h2M69 154h2M75 154h2M151 154h1M397 154h1M404 154h2M71 155h2M77 155h2M250 155h1M331 155h1M402 155h2M409 155h2M73 156h2M79 156h1M153 156h1M400 156h2M407 156h2M68 157h1M75 157h2M250 157h1M329 157h1M399 157h1M405 157h2M69 158h2M77 158h2M155 158h1M403 158h2M71 159h3M249 159h1M327 159h1M401 159h2M74 160h2M157 160h1M76 161h2M249 161h1M325 161h1M412 161h1M159 162h1M323 162h1M410 162h2M65 163h2M249 163h1M407 163h3M67 164h2M161 164h1M321 164h1M405 164h2M413 164h1M69 165h2M249 165h1M403 165h2M411 165h2M64 166h1M71 166h2M163 166h1M319 166h1M408 166h3M65 167h2M73 167h2M248 167h1M406 167h2M414 167h2M67 168h3M165 168h1M317 168h1M404 168h2M412 168h2M63 169h1M70 169h2M248 169h1M409 169h3M64 170h2M72 170h2M167 170h1M315 170h1M407 170h2M415 170h2M66 171h3M248 171h1M313 171h1M406 171h1M413 171h2M62 172h1M69 172h2M169 172h1M410 172h3M63 173h2M71 173h2M171 173h1M248 173h1M311 173h1M408 173h2M65 174h3M407 174h1M68 175h2M173 175h1M247 175h1M309 175h1M70 176h2M418 176h1M175 177h1M247 177h1M307 177h1M416 177h2M59 178h2M413 178h3M61 179h2M97 179h1M177 179h1M247 179h1M305 179h1M411 179h2M63 180h3M99 180h1M409 180h2M419 180h2M58 181h2M66 181h2M101 181h1M179 181h1M247 181h1M303 181h1M415 181h4M60 182h2M68 182h2M103 182h1M301 182h1M412 182h3M62 183h3M105 183h1M181 183h1M246 183h1M410 183h2M420 183h2M65 184h2M107 184h1M109 184h1M299 184h1M416 184h4M57 185h2M67 185h2M111 185h1M183 185h1M246 185h1M413 185h3M59 186h3M113 186h1M297 186h1M411 186h2M421 186h2M62 187h4M115 187h1M185 187h1M246 187h1M417 187h4M56 188h2M66 188h2M117 188h1M295 188h1M414 188h3M58 189h3M119 189h1M121 189h1M187 189h1M246 189h1M412 189h2M61 190h4M123 190h1M293 190h1M65 191h2M125 191h1M189 191h1M245 191h1M127 192h1M291 192h1M423 192h1M129 193h1M191 193h1M245 193h1M289 193h1M419 193h4M55 194h1M131 194h1M415 194h4M56 195h3M133 195h1M135 195h1M193 195h1M245 195h1M287 195h1M414 195h1M59 196h4M137 196h1M422 196h3M63 197h2M139 197h1M195 197h1M244 197h1M285 197h1M417 197h5M54 198h2M141 198h1M414 198h3M56 199h6M143 199h1M197 199h1M244 199h1M283 199h1M423 199h3M62 200h2M145 200h1M147 200h1M199 200h1M418 200h5M53 201h3M149 201h1M244 201h1M281 201h1M415 201h3M56 202h5M151 202h1M201 202h1M424 202h2M61 203h3M153 203h1M244 203h1M279 203h1M418 203h6M52 204h3M155 204h1M203 204h1M277 204h1M415 204h3M55 205h5M157 205h1M159 205h1M243 205h1M60 206h3M161 206h1M205 206h1M275 206h1M163 207h1M243 207h1M165 208h1M207 208h1M273 208h1M167 209h1M243 209h1M422 209h5M169 210h1M171 210h1M209 210h1M271 210h1M416 210h6M51 211h5M173 211h1M243 211h1M56 212h6M175 212h1M211 212h1M269 212h1M422 212h6M177 213h1M242 213h1M267 213h1M417 213h5M51 214h5M179 214h1M213 214h1M56 215h6M181 215h1M242 215h1M265 215h1M426 215h2M183 216h1M185 216h1M215 216h1M420 216h6M50 217h5M187 217h1M242 217h1M263 217h1M417 217h3M55 218h6M189 218h1M217 218h1M191 219h1M242 219h1M261 219h1M423 219h6M193 220h1M219 220h1M418 220h5M50 221h5M195 221h1M197 221h1M241 221h1M259 221h1M55 222h6M199 222h1M221 222h1M201 223h1M241 223h1M257 223h1M203 224h1M223 224h1M255 224h1M205 225h1M241 225h1M424 225h6M207 226h1M209 226h1M225 226h1M253 226h1M419 226h5M49 227h6M211 227h1M227 227h1M241 227h1M55 228h5M213 228h1M251 228h1M368 228h6M215 229h1M229 229h1M240 229h1M363 229h5M419 229h11M217 230h1M249 230h1M49 231h11M219 231h1M221 231h1M231 231h1M240 231h1M223 232h1M247 232h1M419 232h11M225 233h1M233 233h1M240 233h1M49 234h11M227 234h1M245 234h1M229 235h1M235 235h1M240 235h1M243 235h1M419 235h11M231 236h1M233 236h1M49 237h11M237 237h1M239 237h1M241 237h1M237 238h1M239 239h1M241 240h1M237 241h1M239 241h1M241 241h1M243 241h1M419 241h11M245 242h1M247 242h1M49 243h11M235 243h1M238 243h1M243 243h1M249 243h1M233 244h1M251 244h1M419 244h11M238 245h1M245 245h1M253 245h1M49 246h11M231 246h1M255 246h1M238 247h1M247 247h1M257 247h1M259 247h1M419 247h11M229 248h1M261 248h1M49 249h11M238 249h1M249 249h1M263 249h1M227 250h1M265 250h1M419 250h5M237 251h1M251 251h1M267 251h1M424 251h6M55 252h5M225 252h1M253 252h1M269 252h1M271 252h1M49 253h6M237 253h1M273 253h1M223 254h1M255 254h1M275 254h1M221 255h1M237 255h1M277 255h1M257 256h1M279 256h1M418 256h6M219 257h1M237 257h1M281 257h1M283 257h1M424 257h5M55 258h6M259 258h1M285 258h1M50 259h5M217 259h1M236 259h1M287 259h1M261 260h1M289 260h1M418 260h5M59 261h3M215 261h1M236 261h1M291 261h1M423 261h6M53 262h6M263 262h1M293 262h1M295 262h1M51 263h2M213 263h1M236 263h1M297 263h1M417 263h6M265 264h1M299 264h1M423 264h5M56 265h6M211 265h1M236 265h1M301 265h1M51 266h5M209 266h1M267 266h1M303 266h1M417 266h5M235 267h1M305 267h1M422 267h6M57 268h6M207 268h1M269 268h1M307 268h1M309 268h1M52 269h5M235 269h1M311 269h1M205 270h1M271 270h1M313 270h1M235 271h1M315 271h1M203 272h1M273 272h1M416 272h3M235 273h1M319 273h1M321 273h1M419 273h5M61 274h3M201 274h1M275 274h1M323 274h1M424 274h3M55 275h6M199 275h1M234 275h1M325 275h1M415 275h3M53 276h2M277 276h1M327 276h1M418 276h5M61 277h3M197 277h1M234 277h1M329 277h1M423 277h3M56 278h5M279 278h1M331 278h1M415 278h2M53 279h3M195 279h1M234 279h1M281 279h1M335 279h1M417 279h6M62 280h3M337 280h1M423 280h2M57 281h5M193 281h1M234 281h1M283 281h1M339 281h1M414 281h2M54 282h3M341 282h1M416 282h3M64 283h1M191 283h1M233 283h1M285 283h1M343 283h1M345 283h1M419 283h4M60 284h4M347 284h1M423 284h1M56 285h4M189 285h1M233 285h1M287 285h1M349 285h1M55 286h1M187 286h1M351 286h1M233 287h1M289 287h1M353 287h1M412 287h2M185 288h1M355 288h1M414 288h3M65 289h2M232 289h1M291 289h1M357 289h1M359 289h1M417 289h4M61 290h4M183 290h1M361 290h1M411 290h2M421 290h2M58 291h3M232 291h1M293 291h1M363 291h1M413 291h3M56 292h2M66 292h2M181 292h1M365 292h1M416 292h4M62 293h4M232 293h1M295 293h1M367 293h1M410 293h2M420 293h2M59 294h3M179 294h1M369 294h1M371 294h1M412 294h2M57 295h2M67 295h2M232 295h1M297 295h1M373 295h1M414 295h3M63 296h4M177 296h1M375 296h1M409 296h2M417 296h2M60 297h3M175 297h1M231 297h1M299 297h1M377 297h1M411 297h2M419 297h2M58 298h2M68 298h2M379 298h1M413 298h3M66 299h2M173 299h1M231 299h1M301 299h1M381 299h1M416 299h2M63 300h3M418 300h2M61 301h2M171 301h1M231 301h1M303 301h1M60 302h1M407 302h2M169 303h1M231 303h1M305 303h1M409 303h2M71 304h1M411 304h3M69 305h2M167 305h1M230 305h1M307 305h1M406 305h2M414 305h2M66 306h3M309 306h1M408 306h2M416 306h1M64 307h2M72 307h2M230 307h1M410 307h3M62 308h2M70 308h2M163 308h1M311 308h1M405 308h2M413 308h2M67 309h3M230 309h1M407 309h2M415 309h1M65 310h2M73 310h2M161 310h1M313 310h1M409 310h3M64 311h1M71 311h2M230 311h1M404 311h2M412 311h2M68 312h3M159 312h1M315 312h1M406 312h2M414 312h1M66 313h2M74 313h2M229 313h1M408 313h2M65 314h1M72 314h2M157 314h1M317 314h1M410 314h2M69 315h3M229 315h1M412 315h1M67 316h2M155 316h1M319 316h1M66 317h1M153 317h1M401 317h2M77 318h2M321 318h1M403 318h2M75 319h2M151 319h1M229 319h1M405 319h3M73 320h2M323 320h1M400 320h2M408 320h2M71 321h2M79 321h1M149 321h1M228 321h1M402 321h2M410 321h1M69 322h2M77 322h2M325 322h1M398 322h1M404 322h2M75 323h2M147 323h1M228 323h1M399 323h2M406 323h2M73 324h2M80 324h2M327 324h1M401 324h2M408 324h2M71 325h2M78 325h2M145 325h1M228 325h1M397 325h1M403 325h2M70 326h1M76 326h2M329 326h1M398 326h2M405 326h2M74 327h2M82 327h1M143 327h1M227 327h1M400 327h2M407 327h1M72 328h2M80 328h2M141 328h1M331 328h1M402 328h2M78 329h2M227 329h1M404 329h2M76 330h2M139 330h1M333 330h1M406 330h1M74 331h2M227 331h1M394 331h1M85 332h1M137 332h1M335 332h1M395 332h2M83 333h2M227 333h1M337 333h1M392 333h1M397 333h2M82 334h1M135 334h1M393 334h2M399 334h2M80 335h2M87 335h1M226 335h1M318 335h1M339 335h1M395 335h1M401 335h2M79 336h1M85 336h2M133 336h1M319 336h1M390 336h1M396 336h2M77 337h2M84 337h1M226 337h1M320 337h1M341 337h1M391 337h2M398 337h1M82 338h2M87 338h2M131 338h1M320 338h1M393 338h1M399 338h2M81 339h1M86 339h1M129 339h1M226 339h1M321 339h1M343 339h1M389 339h1M394 339h2M79 340h2M84 340h2M91 340h1M322 340h1M390 340h2M396 340h1M83 341h1M89 341h2M127 341h1M226 341h1M323 341h1M345 341h1M392 341h1M397 341h2M81 342h2M88 342h1M323 342h1M393 342h2M399 342h1M80 343h1M86 343h2M125 343h1M324 343h1M347 343h1M395 343h2M85 344h1M385 344h1M397 344h1M83 345h2M94 345h1M225 345h1M349 345h1M386 345h2M82 346h1M93 346h1M383 346h1M388 346h1M92 347h1M225 347h1M384 347h1M389 347h2M90 348h2M96 348h1M385 348h2M391 348h1M89 349h1M94 349h2M225 349h1M381 349h1M387 349h1M392 349h2M88 350h1M93 350h1M98 350h1M382 350h2M388 350h1M87 351h1M92 351h1M97 351h1M224 351h1M379 351h1M384 351h1M389 351h2M90 352h2M96 352h1M380 352h1M385 352h2M391 352h1M89 353h1M94 353h2M100 353h1M224 353h1M381 353h2M387 353h1M392 353h1M88 354h1M93 354h1M98 354h2M383 354h1M388 354h2M92 355h1M97 355h1M224 355h1M384 355h1M91 356h1M96 356h1M196 356h1M375 356h1M385 356h2M94 357h2M196 357h1M224 357h1M376 357h1M387 357h1M93 358h1M103 358h1M196 358h1M377 358h1M92 359h1M102 359h1M196 359h1M223 359h1M374 359h1M378 359h1M101 360h1M106 360h1M196 360h1M375 360h1M379 360h2M100 361h1M105 361h1M195 361h1M223 361h1M371 361h1M376 361h1M381 361h1M99 362h1M104 362h1M108 362h1M195 362h1M372 362h1M377 362h1M382 362h1M98 363h1M102 363h2M107 363h1M195 363h1M223 363h1M369 363h1M373 363h1M378 363h1M383 363h1M97 364h1M101 364h1M106 364h1M110 364h1M195 364h1M370 364h1M374 364h1M379 364h1M96 365h1M100 365h1M105 365h1M109 365h1M195 365h1M223 365h1M371 365h1M375 365h2M380 365h1M99 366h1M104 366h1M108 366h1M195 366h1M372 366h1M377 366h1M381 366h1M98 367h1M103 367h1M107 367h1M222 367h1M373 367h2M378 367h1M102 368h1M106 368h1M364 368h1M375 368h1M379 368h1M101 369h1M106 369h1M115 369h1M222 369h1M365 369h1M376 369h1M105 370h1M114 370h1M362 370h1M366 370h1M377 370h1M104 371h1M113 371h1M117 371h1M222 371h1M363 371h1M367 371h1M103 372h1M112 372h1M116 372h1M360 372h1M364 372h1M368 372h2M111 373h1M115 373h1M221 373h1M361 373h1M365 373h1M370 373h1M111 374h1M114 374h1M119 374h1M362 374h1M366 374h1M371 374h1M110 375h1M113 375h1M118 375h1M122 375h1M221 375h1M358 375h1M363 375h1M367 375h1M372 375h1M109 376h1M113 376h1M117 376h1M121 376h1M359 376h1M364 376h1M368 376h1M108 377h1M112 377h1M116 377h1M120 377h1M221 377h1M360 377h1M364 377h1M369 377h1M111 378h1M115 378h1M119 378h1M353 378h1M361 378h1M365 378h1M110 379h1M114 379h1M118 379h1M127 379h1M221 379h1M354 379h1M362 379h1M366 379h1M113 380h1M118 380h1M126 380h1M350 380h1M355 380h1M363 380h1M367 380h1M112 381h1M117 381h1M125 381h1M129 381h1M220 381h1M351 381h1M355 381h1M364 381h1M116 382h1M125 382h1M128 382h1M348 382h1M352 382h1M356 382h1M365 382h1M115 383h1M124 383h1M128 383h1M132 383h1M220 383h1M349 383h1M353 383h1M357 383h1M123 384h1M127 384h1M131 384h1M345 384h1M350 384h1M354 384h1M358 384h1M122 385h1M126 385h1M130 385h1M134 385h1M220 385h1M346 385h1M350 385h1M354 385h1M358 385h1M122 386h1M126 386h1M130 386h1M133 386h1M347 386h1M351 386h1M355 386h1M359 386h1M121 387h1M125 387h1M129 387h1M133 387h1M220 387h1M340 387h1M348 387h1M352 387h1M356 387h1M124 388h1M128 388h1M132 388h1M341 388h1M349 388h1M353 388h1M124 389h1M127 389h1M131 389h1M139 389h1M219 389h1M341 389h1M349 389h1M353 389h1M127 390h1M131 390h1M138 390h1M142 390h1M338 390h1M342 390h1M350 390h1M354 390h1M126 391h1M130 391h1M138 391h1M141 391h1M219 391h1M335 391h1M338 391h1M343 391h1M351 391h1M125 392h1M129 392h1M137 392h1M141 392h1M336 392h1M339 392h1M343 392h1M129 393h1M136 393h1M140 393h1M144 393h1M332 393h1M336 393h1M340 393h1M344 393h1M136 394h1M139 394h1M144 394h1M147 394h1M333 394h1M337 394h1M340 394h1M345 394h1M135 395h1M139 395h1M143 395h1M146 395h1M333 395h1M338 395h1M341 395h1M345 395h1M135 396h1M138 396h1M142 396h1M146 396h1M327 396h1M334 396h1M338 396h1M342 396h1M346 396h1M134 397h1M137 397h1M142 397h1M145 397h1M153 397h1M324 397h1M328 397h1M335 397h1M339 397h1M342 397h1M137 398h1M141 398h1M145 398h1M152 398h1M325 398h1M328 398h1M335 398h1M340 398h1M343 398h1M136 399h1M140 399h1M144 399h1M152 399h1M155 399h1M321 399h1M325 399h1M329 399h1M336 399h1M340 399h1M140 400h1M144 400h1M151 400h1M155 400h1M158 400h1M318 400h1M322 400h1M326 400h1M329 400h1M337 400h1M139 401h1M143 401h1M151 401h1M154 401h1M158 401h1M161 401h1M319 401h1M322 401h1M326 401h1M330 401h1M337 401h1M143 402h1M150 402h1M154 402h1M157 402h1M161 402h1M319 402h1M323 402h1M327 402h1M330 402h1M150 403h1M153 403h1M157 403h1M160 403h1M313 403h1M320 403h1M323 403h1M327 403h1M331 403h1M149 404h1M153 404h1M156 404h1M160 404h1M167 404h1M310 404h1M313 404h1M320 404h1M324 404h1M328 404h1M331 404h1M149 405h1M152 405h1M156 405h1M159 405h1M167 405h1M170 405h1M307 405h1M310 405h1M314 405h1M321 405h1M324 405h1M328 405h1M148 406h1M152 406h1M155 406h1M159 406h1M166 406h1M170 406h1M173 406h1M307 406h1M311 406h1M314 406h1M321 406h1M325 406h1M329 406h1M151 407h1M155 407h1M159 407h1M166 407h1M169 407h1M173 407h1M176 407h1M304 407h1M308 407h1M311 407h1M315 407h1M322 407h1M325 407h1M151 408h1M154 408h1M158 408h1M165 408h1M169 408h1M172 408h1M176 408h1M305 408h1M308 408h1M312 408h1M315 408h1M322 408h1M326 408h1M154 409h1M158 409h1M165 409h1M168 409h1M172 409h1M175 409h1M182 409h1M298 409h1M305 409h1M309 409h1M312 409h1M315 409h1M323 409h1M157 410h1M164 410h1M168 410h1M171 410h1M175 410h1M182 410h1M185 410h1M295 410h1M298 410h1M306 410h1M309 410h1M312 410h1M316 410h1M164 411h1M168 411h1M171 411h1M174 411h1M181 411h1M185 411h1M188 411h1M292 411h1M295 411h1M299 411h1M306 411h1M309 411h1M313 411h1M316 411h1M163 412h1M167 412h1M171 412h1M174 412h1M181 412h1M184 412h1M188 412h1M191 412h1M289 412h1M292 412h1M296 412h1M299 412h1M306 412h1M310 412h1M313 412h1M317 412h1M163 413h1M167 413h1M170 413h1M174 413h1M180 413h1M184 413h1M187 413h1M191 413h1M289 413h1M293 413h1M296 413h1M300 413h1M307 413h1M310 413h1M314 413h1M166 414h1M170 414h1M173 414h1M180 414h1M183 414h1M187 414h1M190 414h1M197 414h1M280 414h1M283 414h1M290 414h1M293 414h1M296 414h1M300 414h1M307 414h1M311 414h1M169 415h1M173 415h1M180 415h1M183 415h1M187 415h1M190 415h1M197 415h1M200 415h1M203 415h1M274 415h1M277 415h1M280 415h1M284 415h1M290 415h1M293 415h1M297 415h1M300 415h1M308 415h1M172 416h1M179 416h1M183 416h1M186 416h1M190 416h1M196 416h1M200 416h1M203 416h1M206 416h1M268 416h1M274 416h1M277 416h1M280 416h1M284 416h1M290 416h1M294 416h1M297 416h1M301 416h1M308 416h1M179 417h1M182 417h1M186 417h1M189 417h1M196 417h1M199 417h1M203 417h1M206 417h1M212 417h1M215 417h1M261 417h1M265 417h1M268 417h1M274 417h1M277 417h1M281 417h1M284 417h1M291 417h1M294 417h1M297 417h1M301 417h1M178 418h1M182 418h1M186 418h1M189 418h1M196 418h1M199 418h1M202 418h1M206 418h1M212 418h1M215 418h1M218 418h1M222 418h1M258 418h1M261 418h1M265 418h1M268 418h1M275 418h1M278 418h1M281 418h1M284 418h1M291 418h1M294 418h1M297 418h1M302 418h1M178 419h1M181 419h1M186 419h1M189 419h1M195 419h1M199 419h1M202 419h1M205 419h1M212 419h1M215 419h1M218 419h1M222 419h1M228 419h1M231 419h1M234 419h1M237 419h1M243 419h1M246 419h1M249 419h1M252 419h1M258 419h1M261 419h1M265 419h1M268 419h1M275 419h1M278 419h1M281 419h1M285 419h1M291 419h1M294 419h1M298 419h1M181 420h1M185 420h1M189 420h1M195 420h1M199 420h1M202 420h1M205 420h1M212 420h1M215 420h1M218 420h1M222 420h1M228 420h1M231 420h1M234 420h1M237 420h1M243 420h1M246 420h1M249 420h1M252 420h1M258 420h1M262 420h1M265 420h1M268 420h1M275 420h1M278 420h1M281 420h1M285 420h1M291 420h1M295 420h1M298 420h1M185 421h1M188 421h1M195 421h1M199 421h1M202 421h1M205 421h1M212 421h1M215 421h1M218 421h1M222 421h1M228 421h1M231 421h1M234 421h1M237 421h1M243 421h1M246 421h1M249 421h1M252 421h1M258 421h1M262 421h1M265 421h1M268 421h1M275 421h1M278 421h1M281 421h1M285 421h1M292 421h1M295 421h1M188 422h1M195 422h1M199 422h1M202 422h1M205 422h1M211 422h1M215 422h1M218 422h1M222 422h1M228 422h1M231 422h1M234 422h1M237 422h1M243 422h1M246 422h1M249 422h1M252 422h1M258 422h1M262 422h1M266 422h1M269 422h1M275 422h1M278 422h1M282 422h1M285 422h1M292 422h1M194 423h1M198 423h1M201 423h1M205 423h1M211 423h1M214 423h1M217 423h1M222 423h1M228 423h1M231 423h1M234 423h1M237 423h1M243 423h1M246 423h1M249 423h1M252 423h1M259 423h1M262 423h1M266 423h1M269 423h1M275 423h1M279 423h1M282 423h1M286 423h1M198 424h1M201 424h1M204 424h1M211 424h1M214 424h1M217 424h1M221 424h1M227 424h1M231 424h1M234 424h1M237 424h1M243 424h1M246 424h1M249 424h1M253 424h1M259 424h1M262 424h1M266 424h1M269 424h1M276 424h1M279 424h1M282 424h1M201 425h1M204 425h1M211 425h1M214 425h1M217 425h1M221 425h1M227 425h1M231 425h1M234 425h1M237 425h1M243 425h1M246 425h1M249 425h1M253 425h1M259 425h1M262 425h1M266 425h1M269 425h1M276 425h1M279 425h1M204 426h1M211 426h1M214 426h1M217 426h1M221 426h1M227 426h1M231 426h1M234 426h1M237 426h1M243 426h1M246 426h1M249 426h1M253 426h1M259 426h1M263 426h1M266 426h1M269 426h1M211 427h1M214 427h1M217 427h1M221 427h1M227 427h1M231 427h1M234 427h1M237 427h1M243 427h1M246 427h1M249 427h1M253 427h1M259 427h1M263 427h1M266 427h1M217 428h1M221 428h1M227 428h1M231 428h1M234 428h1M237 428h1M243 428h1M246 428h1M249 428h1M253 428h1M259 428h1M227 429h1M231 429h1M234 429h1M237 429h1M243 429h1M246 429h1M249 429h1M253 429h1"/>
<path fill="none" stroke="#ff0000" stroke-width="1" transform="translate(0,0.5)" d="M242 67h1M236 68h2M241 68h1M238 69h1M241 69h1M238 70h1M241 70h1M237 71h1M241 71h1M237 72h1M241 72h1M236 73h1M241 73h1M236 74h8M241 75h1M87 94h1M81 95h2M86 95h1M83 96h1M86 96h1M83 97h1M86 97h1M82 98h1M86 98h1M82 99h1M86 99h1M81 100h1M86 100h1M81 101h8M86 102h1M71 112h5M74 113h2M73 114h1M75 114h1M72 115h1M75 115h1M71 116h1M75 116h1M70 117h1M61 118h1M69 118h1M62 119h1M68 119h1M63 120h1M67 120h1M64 121h1M66 121h1M65 122h1M64 123h1M66 123h1M63 124h1M67 124h1M62 125h1M68 125h1M61 126h1M69 126h1M60 127h1M59 128h1M625 136h1M628 136h1M630 136h2M624 137h2M628 137h2M632 137h1M625 138h1M627 138h1M629 138h1M632 138h1M127 139h5M625 139h1M627 139h1M630 139h2M125 140h2M132 140h2M625 140h1M627 140h1M631 140h1M124 141h1M134 141h1M626 141h1M632 141h1M123 142h1M135 142h1M427 142h5M626 142h1M632 142h1M122 143h1M136 143h1M426 143h1M432 143h1M626 143h1M632 143h1M122 144h1M136 144h1M425 144h1M433 144h1M631 144h1M121 145h1M137 145h1M424 145h1M434 145h1M121 146h1M137 146h1M423 146h1M435 146h1M121 147h1M129 147h1M137 147h1M423 147h1M435 147h1M121 148h1M137 148h1M423 148h1M435 148h1M121 149h1M137 149h1M423 149h1M435 149h1M122 150h1M136 150h1M423 150h1M435 150h1M122 151h1M136 151h1M424 151h1M434 151h1M123 152h1M135 152h1M425 152h1M433 152h1M124 153h1M134 153h1M425 153h1M433 153h1M125 154h2M132 154h2M421 154h1M425 154h1M433 154h1M127 155h5M422 155h1M424 155h1M434 155h1M423 156h1M435 156h1M436 157h1M437 158h1M117 160h6M121 161h2M147 161h1M120 162h1M122 162h1M146 162h3M119 163h1M122 163h1M147 163h1M118 164h1M122 164h1M117 165h1M122 165h1M109 166h5M116 166h1M108 167h1M114 167h2M107 168h1M115 168h1M106 169h1M116 169h1M106 170h1M116 170h1M106 171h1M116 171h1M438 171h3M106 172h1M116 172h1M437 172h1M441 172h1M106 173h1M116 173h1M436 173h1M442 173h1M107 174h1M115 174h1M435 174h1M443 174h1M108 175h1M114 175h1M435 175h1M439 175h1M443 175h1M109 176h5M435 176h1M443 176h1M625 176h1M632 176h1M436 177h1M442 177h1M626 177h6M437 178h1M441 178h1M627 178h1M630 178h1M135 179h1M438 179h3M627 179h1M630 179h1M134 180h3M627 180h1M630 180h1M135 181h1M627 181h1M630 181h1M139 182h1M627 182h1M630 182h1M626 183h6M625 184h1M632 184h1M140 186h1M142 190h1M143 194h1M144 198h1M146 202h1M147 206h1M148 210h1M150 214h1M151 218h1M627 218h3M388 219h1M626 219h1M630 219h1M387 220h1M626 220h1M630 220h1M377 221h2M386 221h1M624 221h4M629 221h4M152 222h1M379 222h1M386 222h1M380 223h1M386 223h1M624 223h9M380 224h1M386 224h1M380 225h1M386 225h1M153 226h1M379 226h1M386 226h1M379 227h1M386 227h1M358 228h1M378 228h1M386 228h1M357 229h3M378 229h1M386 229h1M155 230h1M353 230h1M358 230h1M377 230h1M386 230h1M352 231h1M377 231h1M386 231h1M351 232h1M376 232h1M386 232h1M350 233h1M376 233h15M156 234h1M350 234h1M386 234h1M349 235h1M386 235h1M348 236h1M347 237h1M157 238h1M346 238h1M345 239h1M345 240h1M344 241h1M159 242h1M343 242h1M342 243h1M341 244h1M340 245h1M160 246h1M339 246h1M339 247h1M338 248h1M337 249h1M161 250h1M336 250h1M335 251h1M334 252h1M334 253h1M163 254h1M333 254h1M332 255h1M331 256h1M330 257h1M164 258h1M329 258h1M328 259h1M328 260h1M327 261h1M165 262h1M326 262h1M325 263h1M128 264h1M324 264h1M323 265h1M76 266h3M167 266h1M323 266h1M627 266h3M77 267h2M132 267h1M322 267h1M626 267h1M630 267h1M76 268h1M78 268h1M321 268h1M625 268h1M631 268h1M72 269h2M75 269h1M320 269h1M624 269h1M632 269h1M71 270h1M74 270h1M136 270h1M168 270h1M319 270h1M624 270h1M628 270h1M632 270h1M70 271h1M75 271h1M318 271h1M624 271h1M632 271h1M70 272h1M75 272h1M317 272h1M625 272h1M631 272h1M71 273h1M74 273h1M140 273h1M317 273h1M626 273h1M630 273h1M72 274h2M169 274h1M316 274h1M627 274h3M315 275h1M144 276h1M314 276h1M313 277h1M171 278h1M312 278h1M148 279h1M312 279h1M311 280h1M310 281h1M152 282h1M172 282h1M309 282h1M308 283h1M307 284h1M156 285h1M306 285h1M173 286h1M306 286h1M305 287h1M160 288h1M304 288h1M303 289h1M175 290h1M302 290h1M164 291h1M301 291h1M300 292h1M300 293h1M168 294h1M176 294h1M299 294h1M298 295h1M297 296h1M172 297h1M296 297h1M177 298h1M295 298h1M295 299h1M176 300h1M294 300h1M293 301h1M179 302h1M292 302h1M180 303h1M291 303h1M290 304h1M289 305h1M180 306h1M184 306h1M289 306h1M630 306h3M288 307h1M631 307h2M287 308h1M630 308h1M632 308h1M188 309h1M286 309h1M626 309h2M629 309h1M181 310h1M285 310h1M625 310h1M628 310h1M284 311h1M624 311h1M629 311h1M192 312h1M284 312h1M624 312h1M629 312h1M283 313h1M625 313h1M628 313h1M182 314h1M282 314h1M626 314h2M196 315h1M281 315h1M280 316h1M631 316h1M279 317h1M625 317h2M630 317h1M184 318h1M200 318h1M278 318h1M627 318h1M630 318h1M278 319h1M627 319h1M630 319h1M277 320h1M626 320h1M630 320h1M204 321h1M276 321h1M626 321h1M630 321h1M185 322h1M275 322h1M625 322h1M630 322h1M274 323h1M625 323h8M208 324h1M273 324h1M630 324h1M273 325h1M186 326h1M272 326h1M212 327h1M271 327h1M270 328h1M269 329h1M188 330h1M216 330h1M268 330h1M267 331h1M267 332h1M220 333h1M266 333h1M189 334h1M265 334h1M264 335h1M224 336h1M263 336h1M262 337h1M190 338h1M262 338h1M228 339h1M261 339h1M369 339h3M260 340h1M368 340h1M372 340h1M259 341h1M367 341h1M373 341h1M232 342h1M258 342h1M366 342h1M374 342h1M257 343h1M366 343h1M370 343h1M374 343h1M256 344h1M366 344h1M374 344h1M236 345h1M256 345h1M367 345h1M373 345h1M255 346h1M368 346h1M372 346h1M254 347h1M369 347h3M240 348h1M253 348h1M252 349h1M251 350h1M244 351h1M251 351h1M250 352h1M249 353h1M197 440h3M216 440h3M226 440h3M198 441h2M215 441h1M219 441h1M225 441h1M229 441h1M197 442h1M199 442h1M214 442h1M220 442h1M224 442h1M230 442h1M193 443h2M196 443h1M214 443h1M220 443h1M224 443h1M230 443h1M192 444h1M195 444h1M214 444h1M220 444h1M224 444h1M230 444h1M191 445h1M196 445h1M215 445h1M221 445h1M223 445h1M229 445h1M191 446h1M196 446h1M216 446h1M221 446h1M223 446h1M228 446h1M192 447h1M195 447h1M221 447h1M223 447h1M193 448h2M221 448h1M223 448h1M222 449h1M222 450h1M222 451h1M222 452h1M222 453h1M222 454h1M222 455h1M222 456h1"/>
<path fill="none" stroke="#00ffff" stroke-width="1" transform="translate(0,0.5)" d="M163 154h1M162 155h1M162 156h1M162 157h1M161 158h1M161 159h1M161 160h1M160 161h1M160 162h1M160 163h1M159 164h1M159 165h1M159 166h1M158 167h1M158 168h1M158 169h1M157 170h1M157 171h1M157 172h1M156 173h1M156 174h1M156 175h1M155 176h1M155 177h1M155 178h1M154 179h1M154 180h1M154 181h1M154 182h1M153 183h1M153 184h1M153 185h1M152 186h1M152 187h1M152 188h1M151 189h1M151 190h1M151 191h1M150 192h1M150 193h1M150 194h1M149 195h1M149 196h1M149 197h1M148 198h1M148 199h1M148 200h1M147 201h1M147 202h1M147 203h1M146 204h1M146 205h1M146 206h1M145 207h1M145 208h1M145 209h1M144 210h1M144 211h1M144 212h1M143 213h1M143 214h1M143 215h1M142 216h1M142 217h1M142 218h1M141 219h1M141 220h1M141 221h1M140 222h1M140 223h1M140 224h1M139 225h1M139 226h1M139 227h1M138 228h1M138 229h1M138 230h1M137 231h1M137 232h1M137 233h1M136 234h1M351 234h1M136 235h1M136 236h1M136 237h1M135 238h1M350 238h1M135 239h1M135 240h1M134 241h1M134 242h1M348 242h1M134 243h1M133 244h1M133 245h1M133 246h1M346 246h1M132 247h1M132 248h1M132 249h1M131 250h1M345 250h1M131 251h1M131 252h1M130 253h1M130 254h1M343 254h1M130 255h1M129 256h1M129 257h1M129 258h1M341 258h1M128 259h1M128 260h1M128 261h1M127 262h1M340 262h1M127 263h1M129 265h1M338 266h1M130 267h1M132 269h1M336 270h1M134 271h1M136 273h1M335 274h1M137 275h1M139 277h1M333 278h1M141 279h1M142 281h1M331 282h1M144 283h1M146 285h1M330 286h1M148 287h1M149 289h1M328 290h1M151 291h1M153 293h1M326 294h1M154 295h1M156 297h1M325 298h1M158 299h1M160 301h1M323 302h1M161 303h1M163 305h1M321 306h1M165 307h1M166 309h1M320 310h1M168 311h1M170 313h1M318 314h1M172 315h1M173 317h1M316 318h1M175 319h1M177 321h1M315 322h1M178 323h1M180 325h1M313 326h1M182 327h1M309 328h4M184 329h1M300 329h1M303 329h7M294 330h1M297 330h7M185 331h1M285 331h1M288 331h1M291 331h7M276 332h1M279 332h1M282 332h1M286 332h6M187 333h1M270 333h1M273 333h1M280 333h6M261 334h1M264 334h1M267 334h1M274 334h6M189 335h1M252 335h1M255 335h1M258 335h1M268 335h6M246 336h1M249 336h1M262 336h1M264 336h4M190 337h1M237 337h1M240 337h1M243 337h1M256 337h6M228 338h1M231 338h1M234 338h1M250 338h6M222 339h1M225 339h1M244 339h6M213 340h1M216 340h1M219 340h1M238 340h6M194 341h1M204 341h1M207 341h1M210 341h1M232 341h6M198 342h1M201 342h1M226 342h6M195 343h2M220 343h6M214 344h6M197 345h1M208 345h6M202 346h6M200 347h2"/>
<g fill="#bfbfbf"><rect x="0" y="0" width="640" height="1"/><rect x="0" y="479" width="640" height="1"/><rect x="0" y="0" width="1" height="480"/><rect x="639" y="0" width="1" height="480"/><rect x="479" y="0" width="1" height="480"/></g>
<g text-anchor="middle" style="font-family:'Liberation Mono',monospace;font-size:13px" shape-rendering="auto"><text transform="translate(83.25,305) scale(0.86,1)" fill="#ff0000">1</text><text transform="translate(162.25,393) scale(0.86,1)" fill="#ffff00">2</text><text transform="translate(261.25,410) scale(0.86,1)" fill="#00ff00">3</text><text transform="translate(334.25,382) scale(0.86,1)" fill="#0000ff">4</text><text transform="translate(379.25,336) scale(0.86,1)" fill="#ff0000">5</text><text transform="translate(403.25,277) scale(0.86,1)" fill="#ffff00">6</text><text transform="translate(395.25,183) scale(0.86,1)" fill="#00ff00">7</text><text transform="translate(316.25,95) scale(0.86,1)" fill="#0000ff">8</text><text transform="translate(217.25,78) scale(0.86,1)" fill="#ff0000">9</text><text transform="translate(140.25,106) scale(0.86,1)" fill="#ffff00">1</text><text transform="translate(148.25,106) scale(0.86,1)" fill="#ffff00" font-family="Liberation Sans,sans-serif">0</text><text transform="translate(95.25,152) scale(0.86,1)" fill="#00ff00">1</text><text transform="translate(103.25,152) scale(0.86,1)" fill="#00ff00">1</text><text transform="translate(71.25,211) scale(0.86,1)" fill="#0000ff">1</text><text transform="translate(79.25,211) scale(0.86,1)" fill="#0000ff">2</text></g>
</svg>
<div id="side">
<div style="left:486px;top:7px"><span style="color:#ffffff">Astrolog 5.41G</span></div>
<div style="left:486px;top:17px"><span style="color:#bfbfbf">Chart of the Moment</span></div>
<div style="left:486px;top:27px"><span style="color:#ffffff">Mon December 1, 2025</span></div>
<div style="left:486px;top:37px"><span style="color:#ffffff">10:07:00am (ST -8:00 GMT)</span></div>
<div style="left:486px;top:47px"><span style="color:#bfbfbf">San Francisco, CA</span></div>
<div style="left:486px;top:57px"><span style="color:#bfbfbf">122°40'00"W 37°79'00"N</span></div>
<div style="left:486px;top:67px"><span style="color:#bfbfbf">Placidus houses.</span></div>
<div style="left:486px;top:77px"><span style="color:#bfbfbf">Tropical, Geocentric.</span></div>
<div style="left:486px;top:87px"><span style="color:#ffffff">Julian Day = 2461011.2549</span></div>
<div style="left:486px;top:97px"><span style="color:#bfbfbf">Obliquity = 23°26'09"</span></div>
<div style="left:486px;top:107px"><span style="color:#bfbfbf">Sidereal time: 14:39:44</span></div>
<div style="left:486px;top:117px"><span style="color:#bfbfbf">DeltaT =  95.1164</span></div>
<div style="left:486px;top:137px"><span style="color:#ff0000"> 1st house: </span><span style="color:#ffff00">19Cap42</span></div>
<div style="left:486px;top:147px"><span style="color:#ffff00"> 2nd house: </span><span style="color:#0000ff"> 2Pis14</span></div>
<div style="left:486px;top:157px"><span style="color:#00ff00"> 3rd house: </span><span style="color:#ff0000">12Ari11</span></div>
<div style="left:486px;top:167px"><span style="color:#0000ff"> 4th house: </span><span style="color:#ffff00">12Tau23</span></div>
<div style="left:486px;top:177px"><span style="color:#ff0000"> 5th house: </span><span style="color:#00ff00"> 5Gem51</span></div>
<div style="left:486px;top:187px"><span style="color:#ffff00"> 6th house: </span><span style="color:#00ff00">26Gem53</span></div>
<div style="left:486px;top:197px"><span style="color:#00ff00"> 7th house: </span><span style="color:#0000ff">19Can42</span></div>
<div style="left:486px;top:207px"><span style="color:#0000ff"> 8th house: </span><span style="color:#ffff00"> 2Vir14</span></div>
<div style="left:486px;top:217px"><span style="color:#ff0000"> 9th house: </span><span style="color:#00ff00">12Lib11</span></div>
<div style="left:486px;top:227px"><span style="color:#ffff00">10th house: </span><span style="color:#0000ff">12Sco23</span></div>
<div style="left:486px;top:237px"><span style="color:#00ff00">11th house: </span><span style="color:#ff0000"> 5Sag51</span></div>
<div style="left:486px;top:247px"><span style="color:#0000ff">12th house: </span><span style="color:#ff0000">26Sag53</span></div>
<div style="left:486px;top:267px"><span style="color:#ff0000"> Sun: </span><span style="color:#ff0000"> 9Sag48</span><span style="color:#ffffff"> </span><span style="color:#bfbfbf"> + 0°00'</span></div>
<div style="left:486px;top:277px"><span style="color:#0000ff">Moon: </span><span style="color:#ff0000">24Ari25</span><span style="color:#ffffff"> </span><span style="color:#bfbfbf"> + 3°14'</span></div>
<div style="left:486px;top:287px"><span style="color:#00ff00">Merc: </span><span style="color:#0000ff">21Sco03</span><span style="color:#ffffff"> </span><span style="color:#bfbfbf"> + 2°37'</span></div>
<div style="left:486px;top:297px"><span style="color:#ffff00">Venu: </span><span style="color:#ff0000"> 1Sag09</span><span style="color:#ffffff"> </span><span style="color:#bfbfbf"> + 0°41'</span></div>
<div style="left:486px;top:307px"><span style="color:#ff0000">Mars: </span><span style="color:#ff0000">19Sag51</span><span style="color:#ffffff"> </span><span style="color:#bfbfbf"> - 0°40'</span></div>
<div style="left:486px;top:317px"><span style="color:#ff0000">Jupi: </span><span style="color:#0000ff">24Can29</span><span style="color:#ffffff">R</span><span style="color:#bfbfbf"> + 0°10'</span></div>
<div style="left:486px;top:327px"><span style="color:#ffff00">Satu: </span><span style="color:#0000ff">25Pis10</span><span style="color:#ffffff"> </span><span style="color:#bfbfbf"> - 2°22'</span></div>
<div style="left:486px;top:337px"><span style="color:#00ff00">Uran: </span><span style="color:#ffff00">29Tau01</span><span style="color:#ffffff">R</span><span style="color:#bfbfbf"> - 0°12'</span></div>
<div style="left:486px;top:347px"><span style="color:#0000ff">Nept: </span><span style="color:#0000ff">29Pis24</span><span style="color:#ffffff">R</span><span style="color:#bfbfbf"> - 1°21'</span></div>
<div style="left:486px;top:357px"><span style="color:#0000ff">Plut: </span><span style="color:#00ff00"> 1Aqu55</span><span style="color:#ffffff"> </span><span style="color:#bfbfbf"> - 3°46'</span></div>
<div style="left:486px;top:377px"><span style="color:#bfbfbf">Fire: 4, Earth: 1,</span></div>
<div style="left:486px;top:387px"><span style="color:#bfbfbf">Air : 1, Water: 4</span></div>
<div style="left:486px;top:397px"><span style="color:#bfbfbf">Car: 2, Fix: 3, Mut: 5</span></div>
<div style="left:486px;top:407px"><span style="color:#bfbfbf">Yang: 5, Yin: 5</span></div>
<div style="left:486px;top:417px"><span style="color:#bfbfbf">M: 5, N: 5, A: 8, D: 2</span></div>
<div style="left:486px;top:427px"><span style="color:#bfbfbf">Ang: 5, Suc: 4, Cad: 1</span></div>
<div style="left:486px;top:437px"><span style="color:#bfbfbf">Learn: 3, Share: 7</span></div>
</div>
</body></html>
